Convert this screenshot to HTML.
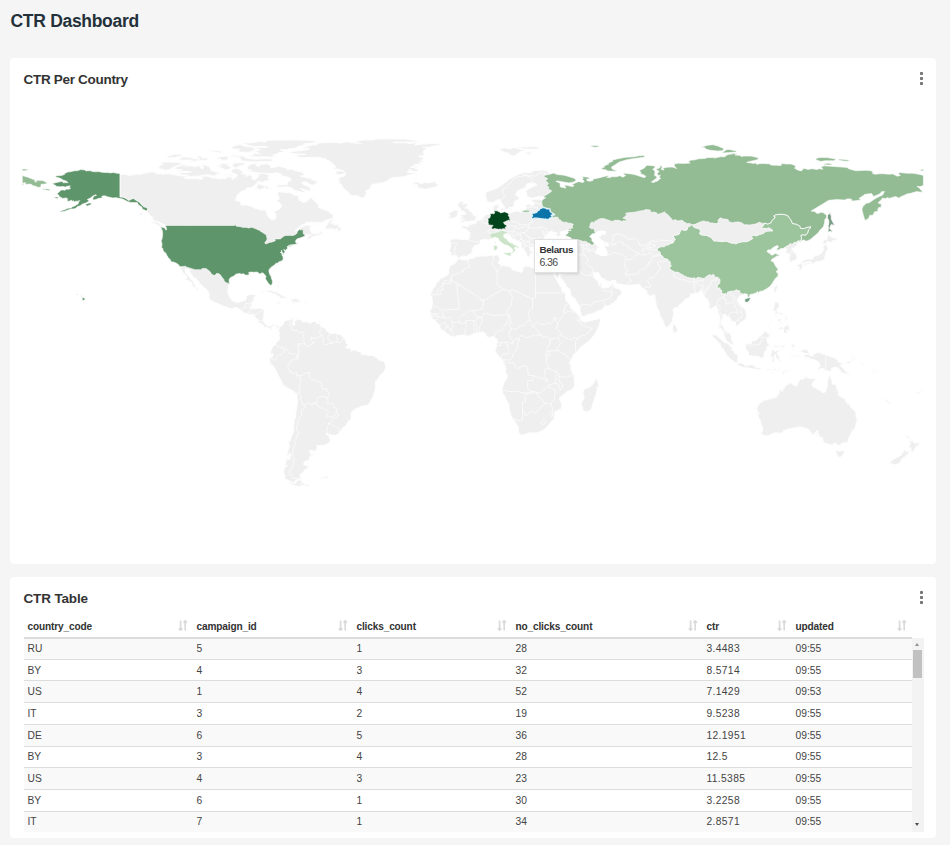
<!DOCTYPE html>
<html><head><meta charset="utf-8">
<style>
*{box-sizing:border-box;margin:0;padding:0}
html,body{width:950px;height:845px;overflow:hidden;background:#f5f5f5;font-family:"Liberation Sans",sans-serif;}
body{position:relative}
.title{position:absolute;left:10.5px;top:10px;font-size:17.5px;line-height:22px;font-weight:bold;color:#24313b;letter-spacing:-0.3px;white-space:nowrap}
.card{position:absolute;left:10px;width:926px;background:#fff;border-radius:4px}
#c1{top:58px;height:506px}
#c2{top:577px;height:261px}
.ct{position:absolute;left:13.5px;font-size:13.5px;line-height:16px;font-weight:bold;color:#333;white-space:nowrap;letter-spacing:-0.3px}
.kebab{position:absolute;width:3px;height:13px;left:910.5px}
.kebab i{position:absolute;left:-0.4px;width:3px;height:3px;border-radius:0.8px;background:#767676}
#map{position:absolute;left:0;top:0;width:950px;height:845px;pointer-events:none}
.tip{position:absolute;left:534.4px;top:238.5px;width:43.2px;height:34.4px;background:#fff;border:1px solid #e2e2e2;border-radius:1px;box-shadow:1px 1px 3px rgba(0,0,0,.15);font-size:10.6px;letter-spacing:-0.6px;color:#4a4a4a;padding:4px 0 0 4px;line-height:12.9px;white-space:nowrap}
.tip b{display:block;font-size:9.9px;color:#333;letter-spacing:-0.35px}
table{position:absolute;left:14px;top:39.6px;width:888px;border-collapse:collapse;table-layout:fixed;font-size:10.25px;color:#444}
th,td{text-align:left;padding:0 0 0 3.5px;white-space:nowrap;overflow:hidden}
th{height:21px;font-weight:bold;color:#333;border-bottom:2px solid #dcdcdc;position:relative;font-size:10.1px;letter-spacing:-0.15px}
td{height:21.7px;border-top:1px solid #dddddd}
tbody tr:nth-child(odd){background:#f9f9f9}
tbody tr:first-child td{border-top:none}
.tw{position:absolute;left:0;top:0;width:926px;height:254.8px;overflow:hidden}
.si{position:absolute;right:5.5px;top:3.8px;width:10px;height:11px}
.sb{position:absolute;left:902px;top:61px;width:11.5px;height:193.5px;background:#f3f3f3}
.sb .th{position:absolute;left:1px;top:12.2px;width:8.7px;height:27.5px;background:#c1c1c1}
.sb .up{position:absolute;left:3px;top:5px;width:0;height:0;border-left:2.8px solid transparent;border-right:2.8px solid transparent;border-bottom:3.4px solid #8f8f8f}
.sb .dn{position:absolute;left:3px;bottom:5.5px;width:0;height:0;border-left:2.8px solid transparent;border-right:2.8px solid transparent;border-top:3.4px solid #4d4d4d}
td:nth-child(5){letter-spacing:0.35px}
</style></head><body>
<div class="title">CTR Dashboard</div>
<div class="card" id="c1">
  <div class="ct" style="top:14px">CTR Per Country</div>
  <div class="kebab" style="top:14px"><i style="top:0"></i><i style="top:5px"></i><i style="top:10px"></i></div>
</div>
<div class="card" id="c2">
  <div class="ct" style="top:13.5px;letter-spacing:-0.15px">CTR Table</div>
  <div class="kebab" style="top:14px"><i style="top:0"></i><i style="top:5px"></i><i style="top:10px"></i></div>
  <div class="tw">
  <table>
   <colgroup><col style="width:169px"><col style="width:160px"><col style="width:159px"><col style="width:191px"><col style="width:89px"><col style="width:120px"></colgroup>
   <thead><tr>
    <th>country_code<svg class="si" viewBox="0 0 10 11"><path d="M2.6 0.6V10M0.9 8.2L2.6 10.2L4.3 8.2M7.2 10.4V1M5.5 2.8L7.2 0.8L8.9 2.8" fill="none" stroke="#dadada" stroke-width="1.7"/></svg></th>
    <th>campaign_id<svg class="si" viewBox="0 0 10 11"><path d="M2.6 0.6V10M0.9 8.2L2.6 10.2L4.3 8.2M7.2 10.4V1M5.5 2.8L7.2 0.8L8.9 2.8" fill="none" stroke="#dadada" stroke-width="1.7"/></svg></th>
    <th>clicks_count<svg class="si" viewBox="0 0 10 11"><path d="M2.6 0.6V10M0.9 8.2L2.6 10.2L4.3 8.2M7.2 10.4V1M5.5 2.8L7.2 0.8L8.9 2.8" fill="none" stroke="#dadada" stroke-width="1.7"/></svg></th>
    <th>no_clicks_count<svg class="si" viewBox="0 0 10 11"><path d="M2.6 0.6V10M0.9 8.2L2.6 10.2L4.3 8.2M7.2 10.4V1M5.5 2.8L7.2 0.8L8.9 2.8" fill="none" stroke="#dadada" stroke-width="1.7"/></svg></th>
    <th>ctr<svg class="si" viewBox="0 0 10 11"><path d="M2.6 0.6V10M0.9 8.2L2.6 10.2L4.3 8.2M7.2 10.4V1M5.5 2.8L7.2 0.8L8.9 2.8" fill="none" stroke="#dadada" stroke-width="1.7"/></svg></th>
    <th>updated<svg class="si" viewBox="0 0 10 11"><path d="M2.6 0.6V10M0.9 8.2L2.6 10.2L4.3 8.2M7.2 10.4V1M5.5 2.8L7.2 0.8L8.9 2.8" fill="none" stroke="#dadada" stroke-width="1.7"/></svg></th>
   </tr></thead>
   <tbody>
    <tr><td>RU</td><td>5</td><td>1</td><td>28</td><td>3.4483</td><td>09:55</td></tr>
    <tr><td>BY</td><td>4</td><td>3</td><td>32</td><td>8.5714</td><td>09:55</td></tr>
    <tr><td>US</td><td>1</td><td>4</td><td>52</td><td>7.1429</td><td>09:53</td></tr>
    <tr><td>IT</td><td>3</td><td>2</td><td>19</td><td>9.5238</td><td>09:55</td></tr>
    <tr><td>DE</td><td>6</td><td>5</td><td>36</td><td>12.1951</td><td>09:55</td></tr>
    <tr><td>BY</td><td>3</td><td>4</td><td>28</td><td>12.5</td><td>09:55</td></tr>
    <tr><td>US</td><td>4</td><td>3</td><td>23</td><td>11.5385</td><td>09:55</td></tr>
    <tr><td>BY</td><td>6</td><td>1</td><td>30</td><td>3.2258</td><td>09:55</td></tr>
    <tr><td>IT</td><td>7</td><td>1</td><td>34</td><td>2.8571</td><td>09:55</td></tr>
    <tr><td>DE</td><td>2</td><td>2</td><td>30</td><td>6.25</td><td>09:55</td></tr>
   </tbody>
  </table>
  </div>
  <div class="sb"><div class="up"></div><div class="th"></div><div class="dn"></div></div>
</div>
<svg id="map" viewBox="0 0 950 845">
<g fill="#efefef" stroke="#fdfdfd" stroke-width="1.15" stroke-linejoin="round"><path d="M119.9,173.9L124.9,174.1L129.9,175.4L133.4,174.6L136.4,173.9L140.2,174.1L143.9,173.1L148.0,172.4L152.2,171.6L153.7,171.9L158.0,174.1L161.5,172.6L161.7,174.4L164.7,173.9L168.7,173.4L172.7,174.4L178.5,175.4L182.0,175.9L184.5,175.6L187.7,176.9L184.2,178.1L188.7,178.6L195.5,178.4L197.8,177.9L200.3,179.4L203.0,178.1L200.5,177.1L202.0,176.3L205.1,176.1L207.1,175.9L209.3,176.4L211.8,177.9L214.5,177.6L218.8,178.9L222.8,178.4L226.5,178.4L226.0,176.9L228.3,176.4L232.3,177.4L232.3,179.6L233.8,177.6L235.8,177.6L237.1,175.1L234.3,173.6L231.3,172.6L231.6,169.9L234.6,168.1L237.8,168.4L240.3,169.6L243.8,172.4L241.6,173.6L246.3,174.1L246.1,176.6L249.6,174.6L252.6,176.4L251.8,178.1L254.1,179.9L256.8,178.1L258.6,175.9L258.8,173.1L262.3,173.4L266.1,173.6L269.3,174.9L269.6,176.1L267.7,177.6L269.3,178.9L269.1,180.1L264.3,181.9L260.8,182.2L258.1,181.4L257.3,182.7L255.1,184.9L254.3,185.9L251.3,187.7L247.8,187.9L245.8,188.9L245.6,190.4L242.8,190.9L239.6,192.9L237.1,195.7L236.1,197.7L235.8,200.7L239.6,200.9L240.6,203.4L241.8,205.2L245.3,204.7L250.1,205.7L252.6,206.7L254.3,207.9L257.3,208.7L260.1,209.7L264.1,209.9L266.8,210.2L266.6,212.2L267.3,214.7L269.1,217.4L272.9,219.9L274.9,219.2L276.1,216.4L274.9,212.7L273.1,211.2L277.1,210.2L279.9,208.4L281.4,206.7L281.1,204.9L279.4,202.7L276.4,200.9L279.4,198.2L278.1,195.9L277.4,192.2L279.1,191.4L283.4,192.2L285.9,192.4L288.1,191.9L290.4,192.7L293.4,194.2L294.1,195.2L298.6,195.2L298.6,197.4L299.4,200.4L301.6,200.9L303.6,202.4L307.1,200.9L309.6,198.2L311.1,197.2L313.1,199.4L316.4,202.4L319.2,205.4L318.2,207.2L321.4,208.4L329.4,211.4L330.4,213.4L332.2,213.9L333.2,214.7L333.4,217.7L329.9,219.4L325.7,220.2L322.7,222.4L318.4,222.7L312.9,222.2L309.1,222.2L306.6,222.4L304.6,224.2L301.4,225.2L297.6,228.7L294.9,231.0L296.9,230.5L300.9,227.2L306.1,225.2L309.9,225.0L312.1,226.2L309.9,227.7L310.6,230.5L311.4,232.5L314.7,233.7L318.9,233.2L321.4,230.5L321.7,232.2L323.2,233.2L320.2,234.7L314.4,236.2L312.1,237.2L309.1,239.2L307.4,239.0L307.1,236.7L311.6,234.7L307.6,234.7L304.8,235.1L305.2,235.9L302.6,237.1L300.0,238.0L297.3,238.8L296.0,240.2L295.6,242.1L296.4,243.4L297.7,243.9L294.8,244.3L290.4,244.9L288.3,245.7L292.7,245.7L287.7,246.4L287.2,248.7L285.3,250.6L283.8,249.2L285.0,252.0L282.8,254.9L282.0,255.6L283.3,259.1L281.7,261.0L279.1,261.7L277.5,263.2L275.0,264.3L271.8,266.7L269.2,269.4L268.9,271.2L270.1,275.1L271.3,277.9L272.4,280.8L272.3,283.5L271.6,285.0L269.7,285.0L268.3,283.3L265.8,279.3L266.0,276.6L263.3,273.2L262.3,272.8L259.8,273.9L256.6,272.0L251.5,272.1L248.6,272.6L249.0,275.1L247.2,275.2L243.5,273.8L237.9,273.7L235.8,274.3L231.1,277.2L229.1,279.6L229.7,283.3L228.8,285.5L228.3,287.3L228.0,290.8L227.8,292.0L228.3,293.3L229.0,294.5L229.5,296.5L231.3,298.3L231.8,299.8L232.8,301.0L235.6,301.5L236.6,302.8L238.8,302.0L240.6,301.8L242.6,301.3L244.1,300.8L245.6,299.8L246.3,298.3L246.3,296.3L246.8,295.5L248.6,294.8L251.3,294.3L253.3,294.3L254.8,294.3L255.6,294.8L255.6,296.0L254.1,297.3L253.6,299.0L254.1,299.3L253.6,300.5L253.1,302.3L252.3,301.8L251.8,301.8L251.8,304.0L252.1,305.5L250.3,308.3L252.1,308.8L254.1,308.6L255.3,308.6L257.6,308.3L260.1,308.1L261.6,308.6L263.1,309.6L264.7,310.6L263.8,314.1L263.8,315.8L263.8,317.1L263.3,318.3L263.0,319.6L263.3,320.8L264.1,322.1L265.1,323.1L266.3,324.1L267.1,325.1L268.3,325.6L269.1,326.1L270.3,325.8L271.3,325.3L272.9,324.8L273.6,324.1L275.1,324.2L276.4,324.6L277.4,325.1L278.4,325.8L279.2,326.4L278.9,326.8L279.5,328.2L279.0,329.0L278.2,328.8L277.9,330.0L277.1,329.3L276.6,327.8L277.1,327.3L276.1,326.3L274.9,325.6L273.6,325.8L273.1,326.6L271.6,327.3L271.3,327.8L272.6,329.3L271.6,329.8L270.3,330.1L269.8,328.6L268.8,328.8L268.3,327.8L266.6,327.3L265.3,327.8L263.8,327.1L263.3,326.4L263.6,325.4L261.8,324.3L260.8,323.3L260.1,322.8L260.3,323.6L259.3,323.6L258.1,322.8L258.3,321.2L257.8,320.8L258.3,320.3L256.3,318.6L254.6,316.8L253.3,315.8L254.3,315.6L253.8,314.8L252.8,315.2L250.6,314.8L248.1,314.3L246.1,313.3L244.6,313.3L242.1,311.8L239.1,309.1L237.8,308.3L235.8,307.6L234.3,307.8L232.3,308.7L231.1,308.9L229.3,308.3L227.5,307.8L225.3,306.6L223.3,306.3L220.5,305.0L218.3,303.9L217.8,303.3L216.3,303.0L213.8,302.3L212.8,301.2L210.1,299.8L208.8,298.3L208.3,297.0L209.0,296.8L208.8,296.0L209.3,295.3L209.3,294.5L208.5,293.3L208.3,292.3L207.5,291.0L205.3,288.5L202.8,286.8L201.5,285.0L199.3,284.0L199.0,283.5L199.3,282.0L198.0,281.3L196.5,280.0L196.0,278.3L194.5,278.3L193.0,276.8L192.0,275.5L191.8,274.8L190.5,273.0L189.5,271.0L189.8,270.0L187.7,269.0L187.0,269.3L185.5,268.5L185.2,269.5L185.5,270.8L185.7,272.5L186.7,273.6L188.5,275.3L189.0,276.0L189.8,277.0L190.5,278.5L191.3,279.3L192.0,280.0L193.5,281.3L194.3,283.8L195.0,284.8L195.8,286.0L195.8,287.3L197.0,287.3L198.0,288.5L199.0,289.5L199.0,290.0L197.8,291.0L196.8,289.5L195.3,288.0L193.3,286.8L192.0,286.3L192.3,284.3L191.8,283.0L190.5,282.3L188.7,281.0L188.0,280.8L186.2,280.3L184.7,278.8L186.0,278.8L187.0,277.8L187.0,276.5L185.2,274.8L183.7,274.0L182.7,272.5L181.7,271.0L180.7,269.0L179.7,266.7L177.6,263.9L176.2,262.9L171.6,261.9L170.6,260.1L168.2,257.6L166.1,254.1L165.1,252.7L163.1,250.6L161.5,247.2L161.9,243.0L161.1,241.0L162.7,234.2L162.3,230.8L160.7,227.5L164.7,227.9L166.0,230.2L166.6,229.6L165.4,225.5L164.5,224.7L160.2,223.0L158.5,221.9L154.0,220.9L152.5,218.7L152.7,217.2L149.7,215.9L149.2,213.9L146.2,212.2L146.1,210.9L147.5,209.7L147.4,208.1L143.2,206.6L140.6,203.7L139.0,201.9L136.8,200.8L135.1,199.7L133.7,198.4L131.2,199.3L128.8,200.6L126.6,199.0L124.8,197.9L122.4,197.2L119.9,197.1ZM84.7,170.0L86.5,171.1L87.6,170.7L91.9,170.8L91.7,171.4L95.5,171.8L98.1,171.6L103.4,172.4L108.2,172.6L110.1,172.9L113.4,172.5L117.2,173.3L119.9,173.6L119.9,182.9L119.9,197.1L122.4,197.2L124.8,197.9L126.6,199.0L128.8,200.6L131.2,199.3L133.7,198.4L135.1,199.7L136.8,200.8L139.0,201.9L140.6,203.7L143.2,206.6L147.4,208.1L147.5,209.7L146.1,210.9L144.7,210.0L142.5,209.2L141.8,207.0L138.6,205.0L137.2,202.6L134.8,202.5L130.9,202.4L127.9,201.7L122.7,199.1L120.3,198.6L116.0,197.7L112.5,197.9L107.6,196.8L104.6,195.7L101.8,196.2L102.3,198.0L101.0,198.1L98.1,198.6L95.9,199.5L93.1,200.0L92.7,198.6L93.9,196.1L96.5,195.3L95.8,194.7L92.6,196.1L90.9,197.8L87.3,199.5L89.2,200.8L86.8,202.6L84.1,203.6L81.6,204.4L81.0,205.5L77.1,206.8L76.3,208.0L73.4,209.0L71.6,208.8L69.3,209.5L66.8,210.4L64.7,211.2L60.4,211.9L60.0,211.5L62.7,210.3L65.2,209.6L67.9,208.2L71.0,207.9L72.2,206.9L75.7,205.4L76.2,204.9L78.1,204.0L78.5,202.1L79.8,200.6L76.9,201.4L76.1,200.9L74.7,201.9L73.1,200.6L72.4,201.5L71.5,200.2L69.0,201.2L67.4,201.2L67.2,199.7L67.7,198.8L66.1,197.9L62.8,198.4L60.7,197.2L59.0,196.6L59.0,195.2L57.0,194.2L58.0,192.7L60.0,191.3L60.9,190.0L63.0,189.9L64.7,190.3L66.7,189.1L68.5,189.3L70.4,188.5L70.0,187.4L68.6,186.9L70.4,185.9L68.9,186.0L66.2,186.5L65.5,187.1L63.5,186.5L59.9,186.8L56.3,186.2L55.2,185.2L52.1,183.7L55.6,182.7L61.2,181.5L63.2,181.5L62.9,182.7L68.2,182.6L66.1,181.0L63.0,180.1L61.3,178.8L58.9,177.8L55.4,177.0L56.8,175.7L61.3,175.6L64.4,174.5L65.0,173.2L67.6,172.1L70.0,171.8L74.8,170.7L77.1,170.8L80.9,169.5L84.7,170.0ZM355.8,141.3L364.2,139.8L373.0,139.9L376.2,139.0L385.0,138.7L405.0,139.0L420.7,141.0L416.0,142.0L406.5,142.1L393.0,142.4L394.2,142.8L403.1,142.5L410.7,143.4L415.5,142.6L417.6,143.5L414.8,145.0L421.2,144.1L433.4,143.1L440.9,143.6L442.3,144.6L432.1,146.4L430.7,147.0L422.7,147.4L428.5,147.5L425.5,149.4L423.5,151.0L423.6,153.8L426.6,155.4L422.7,155.5L418.6,156.3L423.2,157.6L423.8,159.7L421.1,160.0L424.4,162.1L418.8,162.3L421.7,163.3L420.9,164.2L417.3,164.6L413.8,164.6L417.0,166.3L417.0,167.4L412.1,166.4L410.8,167.1L414.2,167.7L417.4,169.2L418.4,171.2L413.9,171.7L412.0,170.7L408.9,169.3L409.8,171.0L406.9,172.3L413.4,172.4L416.9,172.6L410.2,174.7L403.4,176.7L396.1,177.6L393.3,177.6L390.7,178.5L387.2,181.2L381.9,183.0L380.1,183.1L376.8,183.7L373.2,184.3L371.0,185.8L371.0,187.6L369.7,189.2L365.7,191.2L366.7,193.2L365.5,195.2L364.3,197.7L360.7,197.8L357.1,195.8L352.0,195.8L349.6,194.4L347.9,192.0L343.6,188.8L342.3,187.2L342.0,185.0L338.5,182.7L339.4,180.8L337.8,179.9L340.2,177.0L344.0,176.1L345.0,175.0L345.5,173.1L342.7,174.0L341.3,174.3L339.0,174.7L336.0,173.9L335.8,172.2L336.8,170.8L339.1,170.8L344.2,171.5L339.9,169.9L337.7,169.0L335.2,169.4L333.1,168.8L335.9,166.4L334.3,165.5L332.4,163.8L329.4,161.1L326.2,160.1L326.2,159.1L319.5,157.6L314.2,157.4L307.5,157.5L301.4,157.7L298.5,156.9L294.1,155.3L300.7,154.6L305.7,154.4L295.0,153.8L289.4,152.8L289.7,151.8L299.2,150.6L308.4,149.4L309.3,148.5L302.6,147.6L304.8,146.6L313.4,144.8L317.1,144.6L316.0,143.4L322.0,142.8L329.6,142.4L337.4,142.4L340.1,143.1L346.7,141.8L352.7,142.7L356.2,142.9L361.4,143.7L355.4,142.4L355.8,141.3ZM256.2,165.0L258.2,166.6L260.5,164.5L266.8,163.5L271.1,166.1L270.7,167.7L275.7,167.0L278.1,166.0L283.6,167.3L287.0,168.5L287.4,169.6L292.0,169.0L294.6,170.6L300.7,171.6L302.9,172.6L305.2,174.9L300.6,176.1L306.5,177.7L310.5,178.3L314.1,180.6L318.0,180.7L317.3,182.5L312.8,185.4L309.8,184.3L305.8,181.9L302.6,182.3L302.3,183.7L304.9,185.1L308.3,186.3L309.3,187.0L311.0,189.4L310.1,191.2L306.9,190.5L300.7,188.5L304.2,190.7L306.8,192.2L307.2,193.1L300.4,192.1L295.1,190.6L292.0,189.4L292.9,188.7L289.2,187.4L285.5,186.2L285.6,186.9L278.3,187.3L276.2,186.5L277.9,184.6L282.6,184.6L287.7,184.3L286.9,183.4L287.8,182.1L291.0,179.7L290.3,178.6L289.3,177.7L285.5,176.5L280.4,175.7L282.0,175.0L279.4,173.5L277.2,173.3L275.2,172.5L273.9,173.2L269.3,173.5L260.2,173.0L254.9,172.2L250.9,171.9L248.8,171.0L251.4,169.8L247.8,169.8L247.0,167.3L249.0,165.1L251.5,164.0L258.0,163.4L256.2,165.0ZM171.3,169.4L164.7,170.6L163.4,169.5L157.6,168.2L158.7,167.2L160.4,165.3L162.6,163.7L160.2,162.2L168.6,161.8L172.2,162.3L178.6,162.4L181.0,163.1L183.7,164.2L180.6,164.8L174.4,166.6L171.3,168.3L171.3,169.4ZM187.1,165.1L185.8,166.3L191.4,165.5L194.9,166.8L197.7,165.5L200.0,166.3L202.0,168.8L203.3,167.7L201.5,165.2L203.7,164.8L206.2,165.2L209.0,166.2L210.6,168.6L211.4,170.4L215.6,171.6L220.1,172.8L219.8,173.9L215.7,174.1L217.3,175.1L216.5,176.0L211.9,175.6L207.6,174.9L204.7,175.1L200.0,175.9L193.7,176.3L189.2,176.5L187.9,175.4L184.4,174.7L182.2,175.0L179.1,173.0L180.8,172.7L184.7,172.3L188.2,172.4L191.5,172.0L186.6,171.4L181.3,171.6L177.7,171.5L176.4,170.6L182.2,169.6L178.3,169.6L174.0,169.0L176.1,167.1L177.8,166.1L184.5,164.6L187.1,165.1ZM202.0,157.4L203.0,158.2L205.2,157.8L207.8,157.9L208.3,159.2L206.7,160.3L198.3,160.8L192.0,161.8L188.1,161.9L187.8,161.1L193.0,160.0L181.7,160.3L178.2,159.8L181.6,157.4L184.0,156.7L191.0,157.5L195.5,159.0L199.8,159.2L196.3,156.8L198.6,155.9L201.1,156.2L202.0,157.4ZM221.6,163.3L224.6,163.8L229.1,163.5L229.7,164.2L227.4,165.4L231.2,166.5L230.7,168.7L226.6,169.7L224.2,169.5L222.5,168.5L216.3,166.6L216.3,165.8L221.4,166.1L218.7,164.5L221.6,163.3ZM239.6,166.0L236.9,167.8L234.0,167.7L232.5,165.5L232.5,164.3L233.8,163.2L236.3,162.6L241.5,162.6L246.3,163.2L242.6,165.5L239.6,166.0ZM241.5,160.8L240.6,159.4L240.3,158.2L237.8,157.1L232.7,156.8L229.7,156.0L230.7,155.0L235.9,155.1L238.6,155.9L243.5,155.9L245.7,156.7L245.1,157.7L248.0,158.2L249.6,158.8L253.0,158.9L256.6,159.2L260.6,158.6L265.7,158.4L269.8,158.6L272.4,159.5L273.0,160.6L271.4,161.2L267.7,161.8L264.5,161.5L257.3,161.9L252.2,161.9L248.2,161.6L241.5,160.8ZM255.0,148.7L258.1,149.5L254.6,150.3L250.0,152.1L245.6,152.3L240.4,152.0L237.7,151.0L237.7,150.1L239.7,149.4L235.1,149.4L232.4,148.6L230.8,147.5L232.5,146.4L234.3,145.6L236.8,145.4L235.7,144.8L241.5,144.7L244.7,146.1L248.9,146.6L253.1,147.1L255.0,148.7ZM301.4,140.1L308.1,140.3L313.4,140.6L318.0,141.3L317.9,142.0L311.8,143.0L305.8,143.5L303.5,144.1L308.9,144.1L303.0,145.6L299.0,146.3L294.7,148.4L289.5,148.8L287.9,149.3L280.3,149.6L283.8,149.9L282.1,150.3L284.1,151.5L281.8,152.4L277.9,153.1L276.7,154.1L273.2,154.8L273.6,155.4L277.8,155.3L277.9,155.9L271.2,157.4L264.7,156.7L257.3,157.1L253.6,156.8L248.8,156.7L248.5,155.5L253.2,154.9L251.9,153.1L253.5,152.9L260.1,154.0L256.7,152.4L252.7,151.9L254.7,151.0L259.1,150.4L259.9,149.5L256.3,148.5L255.3,147.2L262.1,147.3L264.1,147.6L268.0,146.7L262.3,146.4L253.6,146.6L249.1,145.7L247.1,144.7L244.1,144.0L243.6,143.1L247.3,142.6L250.2,142.6L255.2,142.2L258.8,141.2L261.9,141.4L264.6,142.1L266.5,140.7L269.8,140.3L274.3,140.0L282.0,139.9L283.3,140.2L290.5,139.8L296.0,139.9L301.4,140.1ZM259.7,183.8L260.1,184.9L261.4,184.5L262.9,185.1L265.6,186.0L268.5,186.8L268.7,188.0L270.5,187.8L272.3,188.6L270.1,189.4L266.2,188.8L264.8,187.7L262.3,189.0L258.8,190.3L257.9,188.8L254.5,189.1L256.7,187.8L257.0,185.9L257.9,183.6L259.7,183.8ZM168.7,155.6L174.7,154.1L182.0,153.9L181.7,155.6L179.7,156.6L172.7,157.7L165.3,157.6L168.7,155.6ZM226.3,156.1L228.3,157.2L228.3,158.5L227.1,160.4L220.3,160.2L220.4,158.8L216.3,159.0L216.1,157.0L218.8,157.1L222.6,156.2L226.3,156.1ZM208.8,149.6L220.5,150.9L223.4,153.1L219.3,152.8L215.0,152.1L209.5,151.9L212.0,151.2L209.0,150.6L208.8,149.6ZM226.1,174.4L230.0,174.1L233.6,175.1L231.8,176.0L228.5,175.3L226.5,175.5L223.0,174.4L226.1,174.4ZM332.3,221.2L330.7,223.4L332.3,222.6L334.0,223.1L333.1,224.0L335.3,224.7L336.5,224.1L339.0,224.8L338.2,226.7L340.0,226.2L340.3,227.6L341.1,229.1L340.0,231.3L338.9,231.4L337.2,230.9L337.8,228.9L337.1,228.6L334.2,230.8L332.7,230.7L334.4,229.5L332.0,228.9L329.3,229.0L324.5,229.0L324.1,228.2L325.7,227.3L324.6,226.7L326.7,225.1L329.3,221.1L330.8,219.7L333.0,218.9L334.1,219.0L333.7,219.6L332.3,221.2ZM151.6,221.0L154.2,221.6L155.7,221.9L158.1,222.2L158.9,223.1L160.2,224.3L162.7,225.3L163.7,226.7L162.4,227.0L158.3,225.9L157.6,225.0L155.3,224.1L154.9,223.4L152.3,223.0L151.4,221.6L151.6,221.0ZM139.5,212.5L140.7,212.8L143.1,212.6L142.3,215.5L144.5,217.5L143.5,217.5L142.0,216.3L141.1,215.2L139.8,214.4L139.3,213.3L139.5,212.5ZM311.4,223.3L315.5,223.7L318.1,224.7L318.2,225.2L313.7,224.5L311.3,223.3ZM312.6,230.4L313.5,231.6L315.3,231.9L317.6,231.9L316.4,232.9L315.5,233.0L312.3,232.0L311.7,231.1L312.6,230.4ZM266.9,290.1L269.1,290.2L271.0,290.3L273.4,291.1L274.4,292.0L276.7,291.8L277.6,292.3L279.7,293.9L281.3,295.0L282.1,295.0L283.6,295.5L283.4,296.2L285.3,296.3L287.2,297.3L286.9,297.9L285.2,298.2L283.5,298.4L281.8,298.2L278.2,298.4L279.9,297.0L278.9,296.4L277.3,296.2L276.4,295.5L275.8,294.0L274.4,294.1L272.0,293.5L271.3,292.9L268.0,292.6L267.2,292.1L268.1,291.4L265.6,291.3L263.9,292.6L262.8,292.7L262.5,293.3L261.2,293.5L260.2,293.3L261.5,292.5L262.0,291.6L263.1,291.1L264.4,290.6L266.3,290.3L266.9,290.1ZM293.3,298.8L293.7,298.3L295.6,298.3L297.1,299.0L297.8,298.9L298.2,299.8L299.6,299.8L299.5,300.5L300.6,300.6L301.8,301.5L300.9,302.5L299.7,302.0L298.6,302.1L297.8,302.0L297.3,302.4L296.3,302.6L296.0,302.0L295.1,302.3L294.1,304.0L293.5,303.6L293.3,302.9L291.7,302.5L290.5,302.7L289.0,302.5L287.8,303.0L286.5,302.2L286.7,301.4L289.0,301.7L290.9,301.9L291.8,301.4L290.6,300.3L290.7,299.3L289.1,298.9L289.6,298.2L291.2,298.4L293.3,298.8ZM278.7,301.8L280.4,302.0L281.7,302.6L282.1,303.3L280.4,303.4L279.6,303.8L278.2,303.4L276.8,302.5L277.1,301.9L278.1,301.7L278.7,301.8ZM306.9,301.8L308.2,302.0L308.7,302.5L308.0,303.1L306.1,303.1L304.7,303.2L304.5,302.1L304.9,301.7L306.9,301.8ZM278.8,288.6L278.2,288.8L277.5,287.3L276.6,286.6L277.1,285.0L277.9,285.1L278.8,287.2L278.8,288.6ZM278.1,281.6L275.3,282.0L275.2,281.0L276.3,280.8L278.0,280.9L278.1,281.6ZM280.1,281.5L279.7,283.3L279.2,283.0L279.3,281.7L278.1,280.7L278.1,280.4L280.1,281.5ZM318.5,321.2L319.9,320.8L320.4,320.9L320.3,322.8L318.2,323.1L317.8,322.8L318.5,322.1L318.5,321.2ZM279.2,326.4L280.5,326.5L282.4,324.7L283.4,324.5L283.5,323.1L283.9,321.5L285.3,320.4L286.9,320.3L287.1,319.8L289.1,320.0L291.0,318.7L292.0,318.2L293.2,317.0L294.1,317.1L294.8,317.8L294.3,318.6L294.2,319.2L292.7,319.5L293.6,320.6L293.6,321.9L292.4,323.4L293.4,325.4L294.5,325.2L295.0,323.4L294.3,322.5L294.1,320.6L297.2,319.6L296.9,318.4L297.8,317.7L298.7,319.4L300.4,319.5L302.1,320.8L302.2,321.7L304.4,321.7L307.1,321.4L308.5,322.6L310.4,322.9L311.8,322.1L311.8,321.5L315.0,321.3L318.0,321.3L315.8,322.0L316.7,323.2L318.7,323.4L320.6,324.6L321.0,326.6L322.3,326.6L323.3,327.1L324.9,328.1L326.5,329.7L326.5,331.0L327.5,331.1L328.8,332.3L329.8,333.2L332.8,333.7L333.1,333.2L335.1,333.0L337.8,333.7L338.6,334.0L340.5,334.6L343.1,336.7L343.5,337.7L344.4,337.6L345.0,339.0L346.4,343.3L347.8,343.7L347.8,345.5L345.9,347.5L346.7,348.3L351.1,348.7L351.2,351.2L353.1,349.6L356.3,350.5L360.4,352.0L361.7,353.5L361.3,354.8L364.2,354.1L369.0,355.4L372.8,355.3L376.5,357.4L379.7,360.2L381.6,360.9L383.7,361.0L384.6,361.8L385.5,365.0L385.9,366.5L384.9,370.6L383.6,372.3L380.1,375.7L378.5,378.6L376.7,380.7L376.0,380.8L375.3,382.6L375.5,387.3L374.8,391.2L374.5,392.8L373.8,393.8L373.3,397.2L370.8,400.4L370.4,403.0L368.3,404.1L367.7,405.6L365.0,405.6L361.1,406.5L359.3,407.7L356.5,408.4L353.6,410.4L351.4,412.9L351.1,414.7L351.5,416.1L351.0,418.7L350.5,419.9L348.7,421.2L345.9,425.6L343.7,427.6L342.0,428.8L340.9,431.2L339.3,432.6L338.2,434.2L335.3,435.6L333.5,435.1L332.1,435.4L329.8,434.3L328.1,434.4L326.6,433.0L326.4,434.3L329.6,436.4L329.3,438.2L330.8,439.2L330.7,440.5L328.3,443.7L324.6,445.0L319.6,445.5L316.8,445.3L317.3,446.8L316.8,448.6L317.3,449.9L315.8,450.8L313.2,451.1L310.8,450.2L309.8,450.9L310.2,453.4L311.9,454.1L313.2,453.3L314.0,454.6L311.7,455.4L309.7,457.0L309.3,459.5L308.7,460.8L306.4,460.8L304.4,462.1L303.7,464.0L306.1,465.8L308.5,466.3L307.7,468.6L304.7,470.0L303.1,472.9L300.8,473.9L299.8,475.1L300.6,477.7L302.3,479.1L301.2,479.0L299.0,479.0L297.8,479.6L295.5,480.5L295.1,482.8L294.1,482.9L291.2,482.1L288.4,480.4L285.2,478.9L284.5,477.3L285.2,475.9L283.9,474.2L283.6,469.9L284.7,467.5L287.3,465.6L283.5,464.9L285.9,462.6L286.7,458.5L289.5,459.4L290.8,454.2L289.1,453.5L288.4,456.7L286.8,456.3L287.6,452.7L288.4,448.1L289.6,446.4L288.8,443.9L288.6,441.1L289.7,441.0L291.2,437.0L293.0,433.0L294.0,429.2L293.4,425.5L294.2,423.4L293.9,420.3L295.4,417.3L295.8,412.5L296.6,407.2L297.4,401.6L297.2,397.6L296.7,394.0L294.2,392.6L294.0,391.6L289.0,389.0L284.5,386.3L282.6,384.8L281.6,382.7L282.0,382.0L279.8,378.7L277.4,374.1L275.0,369.1L274.0,367.9L273.2,366.1L271.2,364.5L269.5,363.5L270.3,362.3L269.1,360.0L269.8,358.2L271.8,356.6L273.2,354.8L272.6,353.7L271.7,354.8L270.2,353.7L270.7,353.0L270.3,350.8L271.1,350.4L271.6,348.8L272.5,347.2L272.4,346.2L273.8,345.6L275.5,344.6L275.1,343.9L276.1,343.7L276.0,342.4L276.5,341.5L277.8,341.3L278.8,339.8L279.8,338.5L278.9,337.9L279.3,336.4L278.8,334.1L279.3,333.5L278.9,331.4L277.9,330.0L278.2,328.8L279.0,329.0L279.5,328.2L278.9,326.8L279.2,326.4ZM301.1,479.9L302.0,481.0L303.3,482.9L306.5,484.4L310.0,485.0L308.9,486.3L306.5,486.4L305.2,485.5L303.7,485.4L301.1,485.4L299.6,487.0L297.7,486.3L295.1,485.9L292.0,484.5L289.4,483.2L286.0,480.4L288.0,480.9L291.5,482.6L294.9,483.4L296.2,482.3L297.0,480.6L299.3,479.6L301.1,479.9ZM319.7,477.9L322.7,476.4L324.8,477.0L326.3,476.0L328.3,477.1L327.5,478.0L324.2,478.8L323.0,477.9L320.9,479.0L319.7,477.9ZM458.0,258.6L459.8,258.6L461.4,259.7L463.7,259.5L466.3,260.0L467.4,260.1L469.8,258.7L472.5,258.3L474.1,257.2L476.5,256.5L480.7,256.0L484.9,255.8L486.2,256.2L488.5,255.2L491.2,255.2L492.2,255.8L493.9,255.6L496.6,254.6L498.4,254.9L498.3,256.2L500.4,255.3L500.6,255.7L499.4,257.0L499.3,258.1L500.2,258.7L499.9,260.9L498.2,262.2L498.7,263.5L500.0,263.6L500.6,264.8L501.6,265.2L504.5,266.0L505.6,265.8L507.7,266.2L511.0,267.3L512.2,269.6L514.4,270.1L517.9,271.1L520.6,272.3L521.8,271.7L523.0,270.5L522.4,268.6L523.2,267.4L525.0,266.2L526.8,265.9L530.2,266.4L531.0,267.5L531.9,267.5L532.7,268.0L535.2,268.3L535.8,269.1L539.2,269.0L541.6,269.7L544.1,270.4L545.2,270.8L547.1,270.0L548.2,269.3L550.4,269.1L552.2,269.4L552.8,270.7L553.4,269.9L555.4,270.5L557.4,270.6L558.6,270.0L560.2,274.3L559.5,275.3L559.0,277.2L558.3,278.5L557.7,278.9L556.9,278.1L555.8,277.0L554.0,273.4L553.7,273.6L554.8,276.2L556.3,278.8L558.2,282.7L559.1,284.0L559.9,285.4L562.2,288.2L561.7,288.7L561.8,290.3L564.7,292.5L565.1,293.0L565.9,295.5L565.4,295.9L565.7,298.5L566.7,301.5L567.6,302.1L569.0,303.0L570.5,305.9L571.1,308.3L572.5,309.5L575.9,311.8L577.3,313.3L579.4,315.6L580.7,316.3L581.3,317.1L581.2,318.1L579.8,318.7L580.8,319.4L581.6,319.9L582.1,320.9L583.3,321.9L584.5,322.0L586.9,321.3L589.6,321.0L591.8,320.2L593.0,320.1L593.9,319.6L595.4,319.5L596.2,319.5L597.3,319.1L598.6,318.9L599.8,318.0L600.8,318.0L600.8,318.7L600.6,320.1L600.6,321.5L600.1,322.4L599.4,325.1L598.2,327.9L596.6,331.1L594.5,334.7L592.3,337.5L589.4,340.9L586.9,343.0L583.1,345.5L580.8,347.4L578.1,350.4L577.5,351.7L576.9,352.3L575.2,353.3L574.6,354.4L573.6,354.5L573.3,356.3L572.5,357.3L572.0,359.0L571.0,359.8L569.8,362.9L570.0,364.3L571.6,365.2L571.6,365.9L570.9,367.4L571.1,368.1L570.9,369.4L571.8,370.9L572.8,373.4L573.8,373.9L574.2,375.1L574.1,377.5L574.4,379.7L574.5,383.6L574.9,384.9L574.2,386.7L573.2,388.4L571.6,390.0L569.3,390.9L566.5,392.1L563.6,394.8L562.7,395.3L560.9,397.0L559.9,397.6L559.7,399.4L560.9,401.3L561.4,402.8L561.4,403.5L561.8,403.4L561.8,405.8L561.4,407.0L562.0,407.4L561.6,408.5L560.5,409.4L558.5,410.2L555.5,411.6L554.4,412.5L554.6,413.6L555.2,413.7L555.0,415.0L554.4,416.9L554.1,418.9L553.4,420.1L551.7,421.3L551.3,421.7L550.2,423.0L549.5,424.2L548.1,426.0L545.3,428.6L543.5,430.1L541.6,431.3L539.0,432.2L537.7,432.4L537.4,433.1L535.8,432.7L534.6,433.2L531.9,432.7L530.4,433.0L529.3,432.9L526.8,433.9L524.6,434.3L523.1,435.2L521.9,435.3L520.9,434.4L520.0,434.3L518.9,433.2L518.8,433.6L518.5,432.9L518.5,431.4L517.7,429.7L518.5,429.3L518.4,427.3L516.8,425.0L515.5,422.9L513.7,419.6L511.9,417.7L510.9,415.9L510.4,413.5L509.7,411.7L508.9,407.8L508.9,404.8L508.5,403.4L507.6,402.4L506.3,400.3L505.0,397.3L504.4,395.8L502.4,393.3L502.2,391.4L502.0,389.8L502.3,387.6L503.2,385.3L503.3,384.3L504.1,382.0L504.7,381.0L506.2,379.3L507.0,378.2L507.2,376.4L507.1,375.0L506.4,374.1L505.7,372.6L505.1,371.1L505.2,370.5L506.0,369.5L505.2,367.1L504.7,365.4L503.5,363.8L503.7,363.4L503.3,362.6L502.7,360.7L500.6,358.1L498.0,355.5L496.4,353.5L494.9,350.9L494.9,350.1L495.5,349.3L496.1,347.4L496.6,345.6L496.1,345.2L497.0,342.4L497.4,340.4L496.4,338.8L495.2,338.3L494.7,337.2L494.1,336.8L494.1,336.2L491.5,337.1L490.6,336.9L489.6,337.5L487.6,337.4L486.3,335.9L485.4,334.1L483.7,332.4L481.8,332.4L479.6,332.4L477.5,332.7L475.5,333.3L471.6,334.7L470.2,335.6L467.9,336.3L465.7,335.6L464.6,335.6L462.8,335.1L461.2,335.2L458.2,335.6L456.5,336.3L454.0,337.2L453.5,337.2L452.9,337.2L450.3,336.0L448.0,334.1L445.9,332.7L444.2,331.1L443.5,330.9L441.7,329.9L440.4,328.6L440.0,327.7L439.7,325.8L438.6,324.3L437.6,323.3L437.0,323.0L436.3,322.5L436.1,321.4L435.7,320.9L435.0,320.5L433.6,319.4L432.6,319.3L432.0,318.5L432.0,318.2L431.3,317.6L431.1,317.1L430.7,315.2L431.0,314.1L430.0,312.1L428.7,311.2L429.8,310.8L431.0,309.0L431.6,307.7L431.4,306.4L432.1,305.1L432.4,302.8L432.1,300.3L431.8,299.1L432.1,297.8L431.4,296.6L430.1,295.5L430.2,294.5L430.4,293.3L431.3,292.6L432.1,291.3L432.0,290.5L432.8,288.7L434.2,287.1L435.1,286.7L435.7,285.3L435.8,283.9L436.7,282.4L438.4,281.5L440.0,278.9L441.3,277.9L443.6,277.6L445.6,275.9L446.8,275.3L448.9,273.2L448.3,270.1L449.2,267.9L449.6,266.6L451.2,264.9L453.7,263.7L455.5,262.7L457.2,260.1L458.0,258.6ZM596.8,379.3L597.5,380.4L598.1,382.0L598.5,385.0L599.2,386.2L598.9,387.4L598.5,388.1L597.6,386.7L597.2,387.4L597.6,389.3L597.4,390.4L596.7,390.9L596.6,393.0L595.6,396.0L594.4,399.4L592.8,404.1L591.9,407.6L590.7,410.5L588.7,411.1L586.5,412.2L585.0,411.6L583.1,410.6L582.4,409.3L582.2,407.1L581.3,405.1L581.1,403.3L581.5,401.5L582.7,401.1L582.7,400.2L583.9,398.3L584.1,396.8L583.5,395.6L583.1,394.0L582.9,391.7L583.7,390.3L584.1,388.7L585.3,388.6L586.7,388.1L587.7,387.6L588.8,387.6L590.2,386.2L592.3,384.6L593.0,383.4L592.7,382.3L593.7,382.6L595.1,380.9L595.1,379.4L596.0,378.2L596.8,379.3ZM550.7,174.0L553.3,173.1L557.4,174.6L564.2,175.2L573.7,178.1L575.6,179.2L575.8,180.9L573.0,182.2L568.9,182.9L557.7,181.0L555.9,181.3L560.0,183.2L560.1,184.3L560.3,186.9L563.5,187.6L565.5,188.3L565.8,187.1L564.3,186.0L565.9,185.1L571.9,186.6L574.1,186.0L572.4,184.2L578.2,181.7L580.5,181.9L582.8,182.7L584.3,181.0L582.2,179.5L583.4,178.0L581.6,176.5L588.6,177.3L590.0,178.7L586.9,179.0L586.9,180.4L588.9,181.2L592.7,180.7L593.3,179.1L598.6,177.9L607.3,175.7L609.2,175.9L606.7,177.4L609.8,177.6L611.6,176.8L616.3,176.7L620.0,175.7L622.9,177.2L625.7,175.5L623.1,174.1L624.4,173.3L631.8,174.0L635.3,174.8L644.3,177.7L646.0,176.3L643.4,175.0L643.4,174.5L640.4,174.3L641.2,173.1L639.8,171.1L639.8,170.3L644.4,168.1L646.0,165.8L647.9,165.3L654.5,165.9L655.1,167.3L652.7,169.4L654.2,170.2L655.0,171.9L654.5,175.3L657.2,176.9L656.2,178.5L651.3,182.1L654.1,182.5L655.1,181.6L657.9,180.9L658.5,179.7L660.7,178.5L659.2,177.1L660.4,175.4L657.7,175.2L657.1,173.8L659.1,171.3L655.8,169.3L660.3,167.6L659.7,165.8L661.0,165.8L662.3,167.1L661.3,169.5L664.0,170.0L662.8,168.2L667.0,167.2L672.2,167.1L676.8,168.5L674.6,166.4L674.4,163.8L678.7,163.3L684.7,163.4L690.2,163.0L688.1,161.7L691.0,160.1L693.9,160.0L698.8,158.8L705.4,158.4L706.2,157.7L712.8,157.5L714.8,158.1L720.4,156.7L725.0,156.8L725.7,155.7L728.1,154.6L734.0,153.6L738.3,154.4L734.9,155.0L740.6,155.4L741.3,156.7L743.5,156.1L750.9,156.1L756.5,157.3L758.5,158.2L757.9,159.5L755.1,160.3L748.5,161.7L746.7,162.4L749.8,162.8L753.5,163.4L755.7,162.9L757.0,164.5L758.1,163.9L762.1,163.5L770.1,163.9L770.7,165.1L781.2,165.5L781.4,163.5L786.7,164.0L790.7,164.0L794.7,165.3L795.9,166.9L794.4,167.9L797.5,169.9L801.5,170.9L803.9,168.3L807.9,169.4L812.1,168.7L817.0,169.5L818.8,168.8L822.9,169.2L821.1,166.8L824.4,165.8L847.0,167.4L849.2,168.9L855.7,170.8L865.8,170.3L870.8,170.7L872.9,171.8L872.6,173.6L875.7,174.3L879.0,173.8L883.5,173.7L888.2,174.2L892.9,173.9L897.3,176.2L900.4,175.4L898.4,173.8L899.5,172.6L907.5,173.3L912.7,173.2L919.9,174.4L923.4,175.5L923.4,185.5L920.2,186.6L916.9,186.4L919.1,187.7L920.7,189.8L921.8,190.5L922.1,191.5L921.5,192.2L916.8,191.6L909.8,193.5L907.6,193.8L903.7,195.5L900.1,197.1L899.2,198.2L895.6,196.5L889.1,198.4L887.9,197.5L885.5,198.6L882.2,198.2L881.4,199.9L878.4,202.3L878.5,203.3L881.3,203.9L881.0,207.5L878.7,207.6L877.6,209.7L878.6,210.8L874.2,212.1L873.4,214.9L869.6,215.5L868.9,218.1L865.3,220.4L864.4,218.7L863.3,215.0L861.9,209.5L863.1,206.0L865.2,204.5L865.3,203.4L869.2,202.8L873.7,199.6L878.0,197.1L882.5,195.1L884.5,191.5L881.5,191.7L880.0,193.8L873.6,196.6L871.6,193.5L865.1,194.3L858.9,198.5L860.9,200.1L855.3,200.7L851.5,201.0L851.6,199.2L847.7,198.8L844.6,200.0L837.0,199.6L828.8,200.3L820.7,205.2L811.1,211.1L815.0,211.4L816.2,213.0L818.7,213.5L820.3,212.3L823.0,212.5L826.6,215.2L826.7,217.3L824.8,219.8L824.5,222.8L823.4,226.8L819.6,230.5L818.8,232.2L810.4,239.5L807.1,240.9L805.5,241.0L803.9,239.8L800.6,241.6L800.2,242.4L799.2,242.3L798.2,243.1L797.4,244.0L797.5,245.8L796.2,246.3L795.8,246.8L794.8,247.5L793.1,247.9L792.0,248.6L792.0,249.7L791.7,250.0L792.7,250.4L794.1,251.5L796.3,254.4L796.9,256.0L796.9,258.9L796.0,260.3L793.7,260.8L791.7,261.8L789.4,262.0L789.1,260.7L789.6,258.8L788.5,256.2L790.4,255.8L788.6,253.6L787.4,253.1L786.4,253.8L786.3,253.3L785.7,253.1L785.0,252.7L785.7,251.6L786.3,251.3L786.0,250.9L786.7,249.5L786.5,249.1L785.1,248.8L783.9,248.2L780.4,248.9L778.5,250.1L775.8,250.7L777.2,249.6L776.7,248.6L778.6,246.9L777.3,245.6L775.1,246.5L772.3,248.2L770.7,249.9L768.3,250.0L767.0,251.1L768.3,252.8L770.4,253.2L770.5,254.4L772.4,255.1L775.3,253.3L777.5,254.3L779.1,254.4L779.5,255.7L776.0,256.4L774.8,257.7L772.3,259.0L771.1,260.7L773.8,262.1L774.8,264.5L776.3,266.9L778.0,268.8L777.9,270.6L776.4,271.3L777.0,272.7L778.4,273.4L778.1,275.5L777.4,277.4L776.0,277.7L774.2,280.4L772.2,283.7L769.8,286.7L766.4,289.0L762.9,291.1L760.1,291.4L758.6,292.5L757.7,291.7L756.3,292.9L752.8,294.2L750.1,294.5L749.3,297.2L747.9,297.3L747.2,295.5L747.8,294.5L744.5,293.7L743.3,294.2L740.0,296.3L737.9,298.7L737.3,300.4L739.2,303.0L741.6,306.3L743.8,307.9L745.4,309.9L746.5,314.5L746.2,318.9L744.1,320.5L741.2,322.2L739.2,324.2L736.1,326.6L735.2,325.0L735.9,323.3L734.0,321.8L731.9,321.5L730.9,320.2L729.6,317.6L727.4,316.4L725.2,316.5L725.6,314.5L723.4,314.5L723.2,317.3L721.8,320.9L721.0,323.2L721.2,325.0L722.8,325.0L723.8,327.3L724.3,329.5L725.7,330.9L727.2,331.2L728.5,332.5L729.1,332.8L730.5,334.3L731.6,335.9L731.8,337.6L731.5,338.8L731.7,339.6L731.9,341.1L732.8,341.8L733.8,344.0L733.7,344.9L732.0,345.0L729.6,343.2L726.6,341.2L726.3,339.9L724.9,338.2L724.5,336.2L723.6,334.8L723.9,333.0L723.4,331.9L722.4,331.0L721.9,329.7L720.6,328.3L719.4,327.1L719.0,328.6L718.5,327.2L718.8,325.6L719.5,323.2L719.3,321.4L720.0,319.5L719.2,318.0L719.4,315.3L718.4,314.0L717.6,311.0L717.1,307.8L716.0,305.7L714.4,307.0L711.6,308.8L710.1,308.6L708.6,308.0L709.4,304.8L708.9,302.5L707.0,299.6L707.3,298.7L705.8,298.4L704.0,296.4L703.3,295.1L703.2,293.8L702.7,292.6L701.7,291.1L699.4,291.0L699.6,292.1L698.8,293.4L697.7,292.9L697.4,293.4L696.7,293.1L695.7,292.9L695.3,293.8L693.6,293.8L690.6,294.3L690.7,296.2L689.3,297.7L685.7,299.3L682.9,302.3L681.1,303.9L678.6,305.5L678.6,306.7L677.3,307.3L675.1,308.2L673.9,308.3L673.2,310.2L673.7,313.5L673.8,315.5L672.7,317.9L672.7,322.2L671.4,322.3L670.3,324.2L671.1,325.0L668.8,325.7L667.9,327.5L666.9,328.2L664.5,325.8L663.4,322.3L662.4,319.8L661.6,318.6L660.2,316.2L659.6,313.1L659.2,311.5L656.9,308.1L655.9,303.2L655.1,300.0L655.1,297.0L654.6,294.6L651.0,296.1L649.2,295.8L645.9,292.8L647.1,291.9L646.4,290.9L643.5,288.8L641.6,288.2L640.9,286.4L639.0,284.4L634.4,284.9L630.3,285.0L626.8,285.3L622.1,284.6L619.3,284.0L616.5,283.7L615.4,280.6L614.2,280.2L612.3,280.6L609.8,281.8L606.7,281.0L604.2,279.1L601.8,278.3L600.1,276.0L598.3,272.6L596.9,273.0L595.3,272.2L594.4,273.2L592.9,273.1L593.4,274.2L593.2,274.7L594.0,276.6L595.0,278.8L596.2,279.4L596.7,280.2L598.4,281.3L598.5,282.3L598.3,283.2L598.6,284.0L599.3,284.7L599.6,285.5L600.0,286.2L599.8,284.3L600.5,283.0L601.2,282.7L602.0,283.5L602.0,285.0L601.5,286.5L601.9,287.4L602.4,287.3L604.4,287.6L606.5,287.7L608.0,287.7L609.7,286.0L611.6,284.4L613.2,282.9L613.9,282.0L614.2,282.2L614.0,283.3L613.7,283.7L614.0,285.7L615.1,287.4L616.5,288.3L618.4,288.7L619.8,289.1L621.0,290.6L621.6,291.4L622.5,291.7L622.5,292.3L621.6,293.8L621.2,294.5L620.2,295.3L619.2,297.0L618.1,296.8L617.6,297.4L617.2,298.7L617.5,300.4L617.2,300.7L616.1,300.7L614.5,301.6L614.3,302.8L613.7,303.3L612.2,303.3L611.2,304.0L611.2,305.0L610.0,305.7L608.6,305.4L606.9,306.3L605.8,306.4L604.0,307.1L603.5,308.2L603.4,309.1L600.9,310.1L596.9,311.3L594.7,313.1L593.6,313.2L592.8,313.0L591.4,314.1L589.8,314.6L587.7,314.7L587.1,314.8L586.5,315.5L585.8,315.7L585.4,316.3L584.2,316.3L583.4,316.6L581.7,316.5L581.0,315.0L581.1,313.6L580.7,312.9L580.2,311.1L579.5,310.0L580.0,309.9L579.7,308.8L580.0,308.3L579.9,307.2L579.6,306.1L578.8,305.3L578.6,304.4L577.3,303.5L576.0,301.4L575.3,299.3L573.6,297.6L572.5,297.2L570.8,294.8L570.5,293.1L570.6,291.6L569.2,288.8L568.0,287.8L566.7,287.3L565.8,285.9L566.0,285.3L565.3,284.0L564.5,283.4L563.6,281.6L562.0,279.6L560.8,277.9L559.5,277.9L559.9,276.5L560.0,275.6L560.3,274.6L560.2,274.3L558.6,270.0L559.3,269.1L559.8,267.8L560.3,265.9L560.7,265.3L561.6,263.2L562.9,261.5L562.7,259.5L563.3,258.4L562.4,257.3L563.3,256.4L561.8,256.6L559.7,256.0L558.0,257.4L554.2,257.7L552.2,256.4L549.5,256.3L548.9,257.3L547.2,257.6L544.8,256.3L542.0,256.3L540.5,253.9L538.7,252.5L539.9,250.5L538.3,249.3L541.1,246.9L545.0,246.8L546.0,244.9L550.8,245.3L553.8,243.6L556.7,242.9L560.9,242.9L565.2,244.6L568.8,245.6L571.7,245.2L573.9,245.5L576.8,244.1L577.2,243.1L576.6,241.3L575.2,240.4L573.8,240.1L572.9,239.4L569.7,237.3L566.8,236.3L564.7,234.9L566.5,234.5L568.5,232.4L567.1,231.4L570.8,230.4L570.8,229.8L568.5,230.2L566.5,230.4L564.9,231.2L562.5,231.3L560.3,232.3L560.5,233.8L561.7,234.4L564.3,234.3L563.8,235.2L561.0,235.6L557.6,237.1L556.3,236.6L556.8,235.4L554.1,234.6L554.5,234.2L556.9,233.3L556.2,232.8L552.3,232.1L552.1,231.2L549.8,231.5L548.9,232.9L546.9,234.7L547.0,235.4L545.8,235.9L545.0,235.7L544.3,238.7L543.0,239.7L542.1,241.5L542.9,242.9L543.2,243.9L545.4,244.7L545.0,245.4L542.0,245.5L540.9,246.3L538.8,247.6L538.0,246.4L538.1,245.9L536.5,245.9L535.2,245.6L532.2,246.3L533.9,247.7L532.7,248.1L531.3,248.1L529.9,246.8L529.5,247.3L530.0,248.8L531.3,250.0L530.3,250.6L531.7,251.7L533.0,252.4L533.0,253.8L530.7,253.2L531.4,254.5L529.8,254.7L530.8,256.9L529.1,257.0L527.1,255.9L526.2,253.9L525.7,252.2L524.7,251.1L523.5,249.6L523.3,248.9L522.8,248.8L522.8,248.2L521.4,247.4L521.2,246.2L521.4,244.5L521.7,243.7L521.3,243.3L520.1,242.3L519.0,241.8L516.7,240.8L515.2,239.9L512.9,239.2L510.8,237.4L511.3,237.2L510.2,236.1L510.1,235.3L508.5,234.9L507.8,236.0L507.0,235.1L507.1,234.3L507.2,234.2L505.7,233.6L503.7,234.5L500.4,236.0L496.6,236.5L493.9,237.0L492.5,238.2L491.5,238.7L489.2,240.1L484.3,239.5L480.6,240.3L480.3,241.8L480.4,243.2L478.1,244.9L474.9,245.5L474.6,246.3L473.1,247.7L472.1,249.7L473.1,251.1L471.7,252.3L471.1,253.9L469.2,254.4L467.5,256.3L461.9,256.3L460.4,257.2L459.4,258.1L458.1,257.9L457.2,257.1L456.5,255.6L454.2,255.2L453.2,255.9L451.9,255.5L450.6,255.8L450.9,253.9L450.7,252.3L449.6,252.1L449.0,251.1L449.2,249.5L450.2,248.6L450.4,247.6L450.9,246.1L450.8,245.0L450.3,244.1L450.2,243.3L450.4,241.5L449.3,240.4L452.9,238.6L455.9,239.0L459.3,239.0L462.0,239.5L464.0,239.3L468.1,239.4L469.4,237.9L469.9,232.9L467.3,230.3L465.4,229.0L461.6,228.1L461.4,226.3L464.6,225.7L468.8,226.4L468.0,223.5L470.4,224.6L476.2,222.6L476.9,220.6L479.1,220.1L481.1,219.6L482.4,218.9L484.6,215.2L488.0,214.2L490.1,214.2L490.6,213.7L492.7,213.6L493.2,214.1L494.9,212.9L494.3,211.9L494.2,210.5L493.2,209.1L493.1,206.6L493.5,205.9L494.2,205.2L496.4,205.0L497.3,204.3L499.3,203.6L499.2,204.9L498.5,205.7L498.8,206.4L500.1,206.8L499.5,207.7L498.8,207.5L497.0,209.3L497.7,210.5L497.7,211.4L500.2,212.0L500.2,212.9L502.8,212.4L504.2,211.8L507.0,212.7L508.2,213.5L509.9,212.8L513.8,211.7L516.9,210.8L519.4,211.2L519.6,211.8L522.0,211.9L522.6,210.8L526.1,210.0L525.6,207.9L525.6,206.0L526.9,204.4L529.2,203.6L531.2,205.4L533.2,205.4L533.7,203.5L534.0,202.0L533.1,202.3L531.5,201.4L531.3,199.9L534.4,199.2L537.6,198.9L540.3,199.3L542.9,199.2L545.7,197.8L543.1,196.7L538.6,196.9L534.2,197.8L530.1,198.3L528.6,196.9L526.2,196.1L526.8,193.6L525.6,191.4L526.8,189.9L529.0,188.4L534.7,185.7L536.4,185.1L536.1,184.1L532.7,182.9L528.4,183.6L525.9,185.3L526.3,186.9L522.3,188.9L517.5,191.0L515.7,194.6L517.5,196.3L519.9,197.7L517.6,200.5L515.0,201.1L514.0,205.3L512.6,207.7L509.6,207.4L508.1,209.4L505.2,209.5L504.5,207.2L502.4,204.3L500.4,200.8L498.8,199.2L493.8,202.2L490.5,202.7L487.0,201.4L486.1,198.8L485.3,193.0L487.6,191.4L494.2,189.3L499.2,186.7L503.8,183.2L509.8,178.4L514.0,176.5L520.8,173.3L526.4,172.2L530.5,172.4L534.3,170.3L538.8,170.4L543.3,169.9L551.2,171.8L548.0,172.4ZM465.3,201.3L462.7,204.1L465.2,203.7L467.9,203.7L467.3,205.8L465.0,208.0L467.6,208.2L470.1,211.4L471.8,211.8L473.3,214.6L474.0,215.6L477.0,216.1L476.7,217.7L475.5,218.4L476.5,219.7L474.2,221.0L470.9,221.0L466.6,221.7L465.4,221.2L463.8,222.4L461.5,222.1L459.7,223.1L458.4,222.5L462.1,219.9L464.3,219.4L460.4,219.0L459.6,218.0L462.3,217.2L460.9,215.8L461.4,214.2L465.1,214.4L465.5,213.0L463.8,211.4L460.7,211.0L460.1,210.3L461.0,209.2L460.2,208.5L458.8,209.7L458.7,207.2L457.4,206.0L458.3,203.4L460.3,201.3L462.3,201.5L465.3,201.3ZM457.3,213.3L457.7,215.1L455.8,217.3L451.4,218.8L447.9,218.4L449.9,215.8L448.6,213.2L452.0,211.3L453.9,210.1L456.0,210.0L458.7,211.6L457.3,213.3ZM436.5,181.8L435.9,183.4L438.8,185.1L435.5,187.0L428.3,188.7L426.1,189.2L422.9,188.8L415.9,188.0L418.3,186.9L412.9,185.7L417.3,185.2L417.2,184.5L411.9,183.9L413.6,182.3L417.4,181.9L421.3,183.6L425.1,182.2L428.3,182.9L432.4,181.6L436.5,181.8ZM510.7,148.7L511.7,147.8L515.4,147.7L518.5,148.6L526.8,150.5L520.5,151.5L519.1,153.3L516.9,153.8L515.7,155.8L512.7,155.9L507.3,154.4L509.6,153.5L505.8,152.8L500.9,150.7L499.0,148.7L505.8,147.8L507.2,148.7L510.7,148.7ZM541.4,147.7L537.7,149.1L530.5,149.4L523.1,148.9L522.6,148.3L519.0,148.2L516.3,147.1L524.1,146.4L527.7,147.0L530.2,146.2L536.5,146.8L541.4,147.7ZM534.7,153.2L529.1,154.3L524.7,153.7L526.5,153.0L524.9,152.2L530.1,151.7L531.1,152.7L534.7,153.2ZM504.6,208.9L503.1,210.9L500.5,209.5L500.1,208.5L503.8,207.7L504.6,208.9ZM496.8,242.6L495.9,244.5L494.8,244.0L494.2,242.3L494.7,241.4L496.3,240.4L496.8,242.6ZM532.2,258.7L533.5,259.6L535.5,259.4L537.3,259.6L537.3,260.0L538.6,259.7L538.3,260.5L534.7,260.7L534.8,260.3L531.7,259.8L532.2,258.7ZM554.8,260.1L555.2,260.3L555.9,260.1L556.4,260.1L556.6,260.2L557.9,260.3L557.9,260.5L557.2,260.8L555.4,261.6L554.2,261.2L553.6,260.2L554.8,260.1L554.9,260.1L555.3,259.5L557.1,259.6L559.4,258.8L557.7,259.9L557.9,260.3ZM832.2,382.5L833.1,384.5L834.7,383.6L835.5,384.6L836.7,385.6L836.5,386.7L837.0,388.9L837.4,390.1L838.0,390.4L838.7,392.6L838.4,393.9L839.3,395.6L842.0,396.9L843.7,398.1L845.4,399.1L845.1,399.7L846.5,401.3L847.5,404.0L848.5,403.5L849.5,404.6L850.1,404.2L850.5,406.8L852.3,408.4L853.5,409.3L855.4,411.4L856.1,413.4L856.2,414.8L856.0,416.3L857.2,418.5L857.1,420.7L856.7,421.8L856.0,424.1L856.0,425.5L855.5,427.3L854.4,429.6L852.6,430.8L851.6,432.8L850.8,434.0L850.1,436.1L849.1,437.4L848.5,439.3L848.2,441.0L848.3,441.8L846.8,442.6L844.0,442.7L841.7,443.8L840.6,444.7L839.1,445.8L837.0,444.7L835.5,444.3L835.9,443.0L834.5,443.4L832.3,445.2L830.1,444.6L828.7,444.2L827.3,444.0L824.9,443.3L823.2,441.7L822.8,439.8L822.2,437.5L821.0,437.5L818.6,437.2L819.4,436.0L818.8,434.2L817.6,435.9L815.3,436.4L816.6,435.0L817.0,433.5L818.0,432.3L817.8,430.4L815.8,432.6L814.2,433.4L813.2,435.4L811.3,434.4L811.3,433.1L809.8,431.2L808.5,430.3L808.9,429.7L805.7,428.2L804.0,428.1L801.6,426.9L797.1,427.2L793.8,428.1L791.0,428.9L788.6,428.7L785.9,430.0L783.8,430.6L783.3,431.9L782.4,432.9L780.2,433.0L778.7,433.2L776.5,432.8L774.7,433.0L772.9,433.2L771.4,434.5L770.7,434.4L769.5,435.1L768.2,435.9L766.4,435.8L764.8,435.8L762.1,434.2L760.8,433.7L760.8,432.3L762.1,431.9L762.5,431.3L762.4,430.4L762.7,428.7L762.4,427.2L761.1,424.7L760.7,423.3L760.8,421.8L759.8,420.2L759.7,419.5L758.6,418.5L758.3,416.5L756.9,414.5L756.5,413.5L757.6,414.6L756.8,412.2L758.0,413.0L758.8,413.9L758.7,412.7L757.5,410.7L757.3,409.9L756.7,409.1L756.9,407.7L757.5,407.1L757.8,405.8L757.5,404.4L758.6,402.6L758.8,404.5L759.8,402.7L761.8,401.9L763.1,400.8L765.0,399.9L766.1,399.7L766.8,400.0L768.8,399.1L770.3,398.8L770.7,398.3L771.3,398.0L772.7,398.1L775.4,397.4L776.7,396.3L777.4,394.9L778.8,393.7L778.9,392.7L779.0,391.3L780.7,389.2L781.8,391.3L782.9,390.8L782.0,389.6L782.8,388.4L783.9,389.0L784.2,387.1L785.5,385.8L786.1,384.8L787.4,384.4L787.4,383.7L788.5,384.0L788.6,383.4L789.7,383.0L790.9,382.7L792.7,383.8L794.1,385.3L795.7,385.3L797.3,385.6L796.8,384.2L798.0,382.2L799.1,381.5L798.7,380.9L799.8,379.5L801.3,378.6L802.6,378.9L804.7,378.4L804.6,377.1L802.8,376.3L804.1,376.0L805.8,376.6L807.1,377.6L809.2,378.2L809.9,378.0L811.5,378.8L812.9,378.0L813.9,378.3L814.5,377.8L815.6,379.0L815.0,380.4L814.0,381.4L813.1,381.4L813.4,382.4L812.7,383.7L811.8,384.9L812.0,385.6L814.0,387.0L815.9,387.8L817.2,388.7L819.0,390.2L819.7,390.2L821.0,390.8L821.4,391.6L823.8,392.4L825.5,391.6L825.9,390.2L826.4,389.1L826.8,387.7L827.5,385.7L827.2,384.5L827.4,383.8L827.1,382.4L827.4,380.5L827.9,380.0L827.5,379.2L828.1,377.8L828.6,376.5L828.6,375.7L829.6,374.8L830.3,376.0L830.4,377.6L831.1,377.9L831.2,379.0L832.1,380.2L832.3,381.6L832.2,382.5ZM836.8,450.2L839.2,451.1L840.6,450.7L842.5,450.2L844.0,450.4L844.2,453.4L843.3,454.3L843.1,456.3L842.2,455.6L840.5,457.3L839.9,457.2L838.4,457.1L836.9,455.0L836.5,453.3L835.1,451.1L835.1,450.0L836.8,450.2ZM915.6,448.4L914.6,449.7L913.4,451.4L911.5,452.5L911.0,451.8L910.0,451.4L911.4,449.4L910.6,448.0L907.9,447.0L908.0,446.1L909.8,445.2L910.2,443.3L910.1,441.7L909.1,440.0L909.2,439.5L908.0,438.5L906.0,436.3L905.0,434.5L905.9,434.3L907.2,435.7L909.2,436.4L909.9,438.6L911.7,441.2L911.8,439.5L912.9,440.2L913.3,442.1L915.3,442.9L917.0,443.1L918.4,442.2L919.7,442.5L919.0,444.7L918.3,446.1L916.4,446.1L915.7,446.8L915.9,447.9L915.6,448.4ZM897.5,457.1L899.7,455.8L901.2,454.5L902.3,452.7L903.2,452.0L903.6,450.6L905.4,449.4L905.9,450.5L906.5,451.5L908.3,450.5L909.0,451.6L909.0,452.7L908.1,453.8L906.4,455.7L905.1,456.7L906.1,457.9L904.1,457.9L902.0,458.8L901.3,460.5L899.9,463.0L897.9,464.1L896.7,464.8L894.4,464.8L892.7,464.0L890.0,463.8L889.6,462.9L891.0,461.0L894.1,458.5L895.7,458.1L897.5,457.1ZM808.6,351.0L809.3,355.0L811.9,356.5L814.0,353.9L816.9,352.4L819.1,352.4L821.2,353.2L823.1,354.1L825.8,354.6L830.1,356.3L834.7,357.8L836.5,359.0L837.9,360.3L838.2,361.8L842.4,363.3L843.0,364.6L840.7,364.9L841.3,366.6L843.5,368.2L845.1,370.9L846.6,370.8L846.5,371.9L848.4,372.3L847.6,372.8L850.3,373.9L850.0,374.6L848.4,374.8L847.7,374.1L845.6,373.8L843.1,373.5L841.1,371.9L839.7,370.5L838.4,368.3L835.1,367.2L833.0,367.9L831.5,368.7L831.8,370.6L829.8,371.5L828.4,371.0L825.8,370.9L823.6,368.9L821.1,368.4L820.5,369.1L817.3,369.2L818.4,367.1L819.9,366.4L819.3,363.7L818.1,361.6L813.2,359.5L811.1,359.3L807.4,357.0L806.7,358.2L805.7,358.4L805.1,357.5L805.1,356.4L803.2,355.2L805.9,354.3L807.7,354.3L807.5,353.6L803.8,353.6L802.8,352.2L800.6,351.7L799.5,350.5L802.9,349.9L804.2,349.0L808.2,350.1L808.6,351.0ZM854.1,358.9L853.6,360.6L851.9,362.0L848.9,363.9L847.6,363.9L845.5,363.2L844.1,362.5L844.3,361.7L846.5,362.1L847.9,361.9L848.6,360.6L850.3,361.8L852.4,360.0L852.1,358.5L853.6,358.5L854.1,358.9ZM856.1,359.4L855.4,360.0L854.9,358.6L854.3,357.6L853.2,356.8L851.7,355.7L849.9,355.0L850.6,354.4L852.0,355.1L852.8,355.6L853.9,356.2L854.9,357.3L855.8,358.1L856.1,359.4ZM860.2,361.5L861.0,362.0L862.2,363.6L863.4,364.5L863.0,365.2L862.3,365.4L861.2,364.5L860.1,362.9L859.6,361.0L859.9,360.7L860.2,361.5ZM877.5,372.1L877.1,372.6L875.3,370.4L874.8,368.9L875.6,368.9L876.5,370.9L877.5,372.1ZM875.4,372.8L874.5,372.9L872.9,372.6L872.4,372.2L872.6,371.2L874.2,371.6L875.0,372.2L875.4,372.8ZM872.4,368.2L873.0,369.0L873.1,369.5L871.1,368.4L869.8,367.5L868.8,366.7L869.2,366.4L870.4,367.0L872.4,368.2ZM891.4,387.9L892.9,389.3L892.1,389.6L891.3,388.5L891.4,387.9ZM887.8,400.9L889.8,402.4L891.1,403.6L890.2,404.2L888.8,403.5L887.0,402.4L885.4,401.0L883.8,399.3L883.4,398.4L884.5,398.5L885.9,399.3L887.0,400.2L887.8,400.9ZM919.3,391.5L920.2,392.2L919.8,393.5L918.2,393.9L916.8,393.6L916.6,392.5L917.5,391.6L918.7,391.9L919.3,391.5ZM921.8,390.2L920.2,390.7L919.9,389.7L921.1,389.2L921.9,389.1L923.4,388.3L923.4,389.5L921.8,390.2ZM767.9,337.7L766.5,340.0L768.3,342.4L767.9,343.5L770.7,345.8L767.7,346.1L766.9,347.8L767.0,350.1L764.6,351.8L764.5,354.3L763.6,358.1L763.2,357.3L760.3,358.4L759.4,356.9L757.6,356.7L756.3,355.9L753.4,356.8L752.4,355.6L750.8,355.7L748.7,355.4L748.3,352.1L747.1,351.4L745.9,349.3L745.5,347.0L745.8,344.7L747.3,343.1L749.2,343.9L751.1,343.5L751.6,341.3L752.7,340.9L755.7,340.3L757.5,338.4L758.7,336.8L759.7,335.8L761.8,334.5L763.7,332.7L765.0,330.8L766.0,330.8L767.3,332.0L767.4,333.1L769.1,333.8L771.1,334.6L771.0,335.5L769.3,335.7L769.7,336.9L767.9,337.7ZM711.4,334.4L716.8,335.0L719.1,337.4L721.0,339.1L722.4,340.2L724.7,342.8L727.3,342.9L729.4,344.6L730.8,346.7L732.8,347.8L731.8,349.9L733.2,350.8L734.1,350.8L734.5,352.6L735.4,354.0L737.2,354.2L738.4,355.8L737.8,358.9L737.7,362.7L734.9,362.8L732.8,360.7L729.6,358.7L728.5,357.1L726.6,355.1L725.4,353.2L723.5,349.7L721.3,347.6L720.6,345.5L719.6,343.5L717.4,342.0L716.1,339.8L714.2,338.4L711.6,335.7L711.4,334.4ZM744.7,365.1L749.5,365.3L750.1,364.3L754.7,365.5L755.6,367.1L759.4,367.6L762.5,369.1L759.6,370.0L756.8,369.0L754.6,369.1L752.0,368.9L749.6,368.4L746.7,367.5L744.9,367.2L743.9,367.5L739.3,366.5L738.9,365.4L736.6,365.2L738.3,362.9L741.3,363.0L743.3,364.0L744.4,364.2L744.7,365.1ZM773.3,349.4L775.6,351.6L776.9,350.5L781.6,349.7L781.4,350.8L780.3,350.4L779.2,351.9L777.0,352.9L779.3,356.1L778.9,356.9L781.1,359.8L781.1,361.5L779.8,362.2L778.8,361.3L780.0,359.3L777.6,360.2L776.9,359.5L777.3,358.6L775.5,357.1L775.6,354.7L774.0,355.4L774.3,361.9L772.7,362.3L771.6,361.6L772.3,359.3L771.9,356.8L770.9,356.8L770.1,355.1L771.1,353.5L771.5,351.5L772.8,347.7L773.3,346.7L775.4,344.8L777.4,345.6L780.5,345.9L783.4,345.8L785.9,344.0L786.3,344.5L784.3,347.0L782.4,347.5L780.0,347.0L775.9,347.1L773.7,347.5L773.3,349.4ZM785.6,370.4L785.9,369.8L788.1,369.2L789.8,369.1L790.6,368.8L791.6,369.1L790.6,369.8L788.0,370.9L785.9,371.6L784.3,373.5L782.2,374.0L781.9,373.7L782.1,372.9L783.2,371.4L785.6,370.4ZM767.9,368.4L768.8,369.0L770.4,368.8L771.0,369.9L768.1,370.4L766.4,370.7L765.0,370.7L765.9,369.3L767.3,369.3L767.9,368.4ZM780.5,368.3L780.1,369.8L776.3,370.5L773.0,370.2L773.0,369.2L775.0,368.7L776.6,369.5L778.2,369.3L780.5,368.3ZM774.3,373.1L775.2,373.1L775.0,373.7L774.0,373.8L770.6,372.0L772.9,371.5L774.3,373.1ZM793.0,342.7L793.2,344.0L794.7,344.2L795.0,345.3L794.8,347.4L793.5,347.2L793.1,348.7L794.2,350.1L793.5,350.4L792.5,348.8L791.7,345.6L792.2,343.6L793.0,342.7ZM799.4,355.8L800.3,357.8L798.2,356.7L796.1,356.5L794.7,356.7L793.0,356.6L793.6,355.2L796.7,355.1L799.4,355.8ZM790.7,355.9L791.3,356.8L790.4,357.6L788.7,357.1L788.2,356.1L790.7,355.9ZM776.5,301.8L778.1,302.5L778.8,301.8L779.1,302.5L778.6,303.5L779.5,305.3L778.8,307.4L777.4,308.2L777.0,310.3L777.5,312.2L778.9,312.5L780.0,312.2L783.1,313.6L782.9,315.0L783.7,315.6L783.4,316.7L781.5,315.5L780.5,314.2L779.9,315.1L778.3,313.6L776.0,314.0L774.8,313.4L774.9,312.4L775.7,311.7L774.9,311.2L774.6,312.1L773.4,310.6L773.0,309.5L772.9,307.2L773.9,308.0L774.2,304.0L775.0,301.8L776.5,301.8ZM789.2,327.0L789.4,328.7L789.6,330.1L788.7,332.4L787.8,329.9L786.6,331.1L787.4,333.0L786.7,334.1L783.8,332.7L783.1,330.9L783.8,329.7L782.2,328.5L781.5,329.5L780.3,329.4L778.4,330.8L778.0,330.1L779.0,328.0L780.6,327.3L781.9,326.3L782.8,327.5L784.7,326.8L785.1,325.7L786.9,325.6L786.7,323.7L788.8,324.8L789.0,326.1L789.2,327.0ZM771.9,319.6L772.4,321.7L770.8,323.1L769.4,324.8L766.1,327.1L767.3,325.4L769.2,323.9L770.7,322.1L772.0,319.6ZM783.9,316.7L786.3,316.7L787.0,317.7L787.7,320.4L785.7,319.8L785.8,320.6L786.4,322.2L785.2,322.7L785.1,321.0L784.4,320.8L784.0,319.3L785.4,319.5L785.4,318.6L783.9,316.7ZM781.0,320.1L781.0,319.1L779.8,318.4L778.2,318.3L778.1,320.8L778.3,322.0L779.5,321.7L780.3,322.4L780.6,320.9L782.0,320.7L781.6,322.4L783.4,320.0L783.2,322.4L782.3,323.2L781.5,324.8L779.7,323.1L780.3,322.4L781.0,320.1ZM777.0,315.4L776.4,317.5L775.3,316.3L774.0,314.4L776.2,314.5L777.0,315.4ZM777.7,287.1L776.2,291.1L775.1,293.1L773.8,291.0L773.5,289.1L774.9,286.7L777.0,284.8L778.1,285.5L777.7,287.1ZM677.6,329.3L677.2,331.9L676.1,332.6L674.0,333.2L672.8,331.2L672.3,327.6L673.5,323.5L675.2,324.9L676.3,326.7L677.6,329.3ZM825.7,255.1L824.8,257.1L825.2,258.4L823.9,260.1L820.7,261.3L816.3,261.5L812.7,264.3L811.0,263.4L810.9,261.5L806.6,262.0L803.6,263.2L800.7,263.3L803.2,265.1L801.6,269.4L800.0,270.4L798.7,269.5L799.4,267.2L797.8,266.5L796.8,264.8L799.1,264.0L800.4,262.4L802.9,261.1L804.8,259.4L809.8,258.7L812.4,259.2L815.1,254.7L816.7,255.9L820.4,253.4L821.8,252.4L823.4,249.4L823.0,246.6L824.0,245.0L826.7,244.5L828.0,248.0L828.0,250.0L825.7,252.6L825.7,255.1ZM833.0,237.5L834.8,238.1L836.6,237.0L837.1,239.8L833.4,240.5L831.2,243.0L827.3,241.3L825.9,244.0L823.2,244.1L822.8,241.6L824.0,239.6L826.7,239.5L827.4,236.0L828.2,234.1L831.1,236.7L833.0,237.5ZM809.8,262.6L810.2,263.5L808.7,265.0L807.7,264.2L806.4,264.8L805.8,266.3L804.1,265.5L804.2,264.3L805.5,262.8L807.0,263.1L808.0,262.1L809.8,262.6Z"/></g>
<g fill="none" stroke="#fbfbfb" stroke-width="0.9" stroke-linejoin="round" stroke-linecap="round"><path d="M294.3,318.6L292.7,319.0L292.0,320.3L291.1,321.0L290.3,321.9L290.0,323.7L289.4,325.2L290.6,325.3L291.0,326.5L291.5,327.0L291.7,328.1L291.4,329.0L291.5,329.5L292.1,329.7L292.7,330.6L296.0,330.4L297.4,330.7L299.2,332.8L300.2,332.6L302.0,332.7L303.4,332.4L304.3,332.8L303.8,334.2L303.3,335.0L303.1,336.8L303.6,338.5L304.3,339.2L304.4,339.8L303.1,341.0L304.0,341.6L304.7,342.5L305.4,345.0M305.4,345.0L305.0,345.3L304.5,343.8L303.8,343.0L303.0,343.9L298.1,343.8L298.1,345.4L299.6,345.6L299.5,346.6L299.0,346.3L297.6,346.7L297.6,348.6L298.7,349.5L299.1,350.9L299.0,352.0L297.9,358.9M297.9,358.9L296.7,357.5L295.9,357.5L297.5,354.9L295.6,353.8L294.1,354.0L293.2,353.5L291.8,354.2L289.9,353.9L288.5,351.3L287.3,350.6L286.5,349.4L284.8,348.3L284.2,348.5M284.2,348.5L283.1,347.9L281.9,347.0L281.2,347.4L279.1,347.1L278.4,346.0L278.0,346.1L275.5,344.6M284.2,348.5L284.5,350.4L283.8,352.0L281.0,354.6L278.0,355.6L276.5,357.8L276.0,359.5L274.6,360.5L273.6,359.2L272.5,359.0L271.5,359.2L271.4,358.3L272.1,357.7L271.8,356.6M305.4,345.0L306.8,346.3L308.8,346.1L309.3,345.3L311.1,344.8L312.1,344.4L312.4,343.3L314.2,342.6L314.1,342.1L312.0,341.8L311.6,340.3L311.7,338.6L310.6,337.9L311.1,337.7L312.9,338.0L314.9,338.7L315.7,338.1L317.4,337.7L320.2,336.7L321.2,335.8L320.8,335.1M320.8,335.1L319.1,333.2L319.8,332.5L319.8,331.3L321.3,330.9L321.9,330.5L321.1,329.6L321.3,328.6L323.3,327.1M320.8,335.1L322.1,335.0L322.7,335.6L322.4,336.7L323.2,337.0L323.8,338.2L323.1,339.1L322.7,341.2L323.4,342.5L323.5,343.6L325.1,344.8L326.3,344.9L326.6,344.4L327.4,344.3L328.5,343.9L329.3,343.2L330.7,343.4L331.3,343.3M331.3,343.3L329.8,341.2L329.5,339.8L328.7,339.8L327.6,337.9L328.0,336.6L327.9,336.1L329.4,335.4L329.8,333.2M331.3,343.3L332.7,343.5L332.9,343.0L332.5,342.5L332.7,341.8L333.7,342.0L334.9,341.8L336.4,342.3M336.4,342.3L337.0,341.3L337.2,340.1L337.7,339.0L336.7,337.6L336.5,335.8L337.8,333.7M336.4,342.3L337.5,342.8L338.2,342.1L338.8,342.3L339.1,343.0L340.3,342.8L341.3,341.8L342.1,340.0L343.5,337.7M297.9,358.9L295.7,358.7L293.2,359.6L290.4,361.3L290.2,362.5L289.6,363.3L289.8,364.7L288.3,365.4L288.3,366.5L287.6,366.9L288.7,369.2L290.1,370.7L289.5,371.8L291.2,371.9L292.2,373.3L294.4,373.3L296.4,371.9L296.3,375.7L297.4,375.9L298.8,375.5M298.8,375.5L301.0,379.5L300.4,380.4L300.3,382.1L300.3,384.3L299.3,385.5L299.7,386.4L299.2,387.3L300.2,389.4L298.7,392.1M298.7,392.1L298.0,393.4L296.7,394.0M298.8,375.5L300.7,375.7L302.0,375.7L302.5,374.9L304.7,373.9L306.0,373.0L309.3,372.5L309.0,374.4L309.3,375.4L309.1,377.1L311.8,379.3L314.7,379.7L315.7,380.6L317.3,381.1L318.4,381.9L320.0,381.8L321.4,382.6L321.5,384.0L322.0,384.8L322.0,385.8L321.3,385.9L322.3,388.8L327.1,388.9L326.7,390.4L327.0,391.3L328.3,392.0L328.9,393.6L328.5,395.6L327.8,396.7L328.0,398.1L327.2,398.6M327.2,398.6L327.2,397.8L324.9,396.6L322.6,396.5L318.2,397.2L317.0,399.4L316.9,400.8L315.9,403.8M315.9,403.8L315.5,403.2L312.7,403.1L311.7,405.2L310.2,403.4L307.0,402.7L304.9,405.0M304.9,405.0L303.1,405.3L302.1,401.9L300.7,399.1L301.5,396.7L300.2,395.6L299.9,393.8L298.7,392.1M304.9,405.0L305.2,405.6L304.3,408.2L301.6,409.5L301.7,413.7L301.2,414.5L301.9,415.4L300.1,417.0L298.5,419.3L297.6,421.6L297.8,424.0L296.3,426.6L297.5,430.9L298.1,431.4L298.1,433.7L296.7,436.1L296.7,438.2L294.8,439.9L294.8,442.2L295.6,444.6L294.1,445.5L293.4,447.7L292.8,450.3L293.2,453.4L292.2,453.9L292.8,456.8L294.0,457.7L293.1,458.8L294.3,459.3L294.6,460.2L293.5,460.7L293.8,462.1L292.8,465.4L291.5,467.6L291.8,468.8L291.0,470.4L289.1,471.5L289.3,474.2L290.2,475.1L291.8,475.0L291.8,476.8L292.8,478.3L298.9,478.6L301.2,479.0M301.1,479.9L301.1,485.4M315.9,403.8L320.5,407.9L322.6,408.2L325.6,410.1L328.2,411.1L328.6,412.2L326.1,416.0L328.6,416.7L331.4,417.1L333.4,416.7L335.7,414.7L336.1,412.5M336.1,412.5L336.6,411.1L337.0,409.6L337.0,408.2L336.1,407.8L335.1,408.2L334.2,408.1L333.9,407.1L333.6,404.8L333.2,404.1L331.5,403.4L330.5,403.9L327.8,403.4L328.0,400.0L327.2,398.6M336.1,412.5L338.6,413.5L338.6,415.5L336.5,416.9L334.8,417.9L331.9,420.3L328.6,423.7M328.6,423.7L328.0,425.7L327.3,428.3L327.3,430.8L326.8,431.3L326.6,433.0M328.6,423.7L330.2,423.5L332.7,425.4L333.7,425.3L336.3,426.9L338.2,428.3L339.7,430.0L338.6,431.2L339.3,432.6M242.0,311.7L242.1,311.0L242.3,310.4L242.0,309.9L243.2,307.9L246.4,307.9L246.5,307.0L246.1,306.9L245.8,306.3L244.9,305.7L243.9,304.9L245.1,304.9L245.1,303.5L247.4,303.5L249.7,303.5L249.7,303.1L251.3,301.8L251.8,301.8M249.7,303.5L249.7,305.5L249.5,308.3L250.2,308.3M252.0,308.7L250.9,309.7L249.7,310.4L249.5,310.9L249.7,311.4L249.2,312.0L248.6,312.2L248.7,312.5L248.3,312.7L247.4,313.4L247.3,313.7M249.2,312.0L249.9,312.2L250.5,312.7L251.2,313.1L251.3,313.4L252.4,313.2L252.9,313.3L253.3,313.6L253.1,314.6M254.3,315.6L255.1,315.5L255.4,314.9L255.8,314.9L255.7,313.7L256.3,313.6L256.8,313.6L257.3,313.0L258.1,313.5L258.3,313.2L258.8,312.9L259.7,312.2L259.7,311.7L260.0,311.7L260.3,311.1L260.5,311.0L261.0,311.4L261.5,311.5L262.0,311.2L262.6,311.2L263.5,310.9L263.9,310.5L264.7,310.6M258.3,320.3L258.7,320.0L260.3,320.7L260.9,320.4L261.7,320.6L262.1,321.1L262.8,321.2L263.4,320.7M266.2,324.1L265.3,324.4L265.3,325.4L265.8,325.7L265.4,326.0L265.5,326.5L265.3,327.0L265.2,327.5M293.3,298.8L293.6,300.1L293.4,301.1L292.7,301.5L293.4,302.2L293.3,302.9M467.4,260.1L468.4,261.7L468.5,263.2L469.4,265.9L470.0,266.4L469.6,267.4L466.3,267.8L465.2,268.7L463.7,268.9L463.6,270.8L460.7,271.8L459.7,273.0L457.7,273.7L455.2,274.1L451.1,275.9L451.1,278.9M451.1,278.9L450.8,278.9L450.8,280.2L449.3,280.3L448.5,280.9L447.3,280.9L446.4,280.5L444.3,280.8L443.5,282.8L442.7,282.9L441.6,286.1L438.1,288.8L437.2,292.3L436.2,293.4L435.9,294.3L430.3,294.5M451.1,278.9L451.1,279.5L451.1,283.3L442.9,283.2L443.0,289.6L440.6,289.8L440.0,291.1L440.5,294.7L430.7,294.7L430.1,295.5M451.1,279.5L460.5,285.6M460.5,285.6L456.7,285.6L457.9,296.4L459.1,307.2L459.5,307.6L459.0,309.3L448.9,309.3L448.6,309.9L447.6,309.7L446.2,310.2L444.4,309.5L443.6,309.6L443.2,311.1L442.4,311.5M442.4,311.5L440.7,309.8L439.2,308.0L437.5,307.3L436.3,306.6L434.9,306.6L433.7,307.1L432.5,306.9L431.6,307.7M460.5,285.6L469.0,291.1L477.4,296.5L478.0,297.7L479.5,298.4L480.7,298.8L480.7,300.4L483.5,300.1M483.5,300.1L487.1,299.0L494.3,294.1L502.9,289.4M502.9,289.4L501.8,287.8L499.8,286.6L498.6,287.1L497.7,285.7L497.6,284.6L496.2,282.8L497.2,281.7L496.9,280.2L497.3,278.8L497.1,277.7L497.5,275.6L497.4,274.5L496.6,272.2M496.6,272.2L495.5,267.8L494.0,266.7L493.9,266.1L491.9,264.6L491.7,262.7L493.2,261.3L493.8,259.3L493.4,256.9L493.9,255.6M496.6,272.2L497.8,271.7L498.0,270.6L497.7,269.6L499.5,268.6L500.2,267.8L501.4,267.1L501.6,265.2M502.9,289.4L506.8,290.4L508.2,291.8L510.0,290.9L512.5,289.5L522.5,294.3L532.5,299.1M532.5,299.1L532.5,298.0L535.4,298.0L535.4,293.0L535.4,283.8L535.4,274.9L534.7,272.9L535.3,271.4L534.9,270.3L535.8,269.1M510.0,290.9L510.6,294.8L511.6,295.4L511.6,296.2L512.6,297.1L512.1,298.1L511.1,303.2L511.0,306.5L507.8,308.9L506.7,312.1L507.8,313.1L507.8,314.7L509.4,314.7L509.1,315.9M535.4,293.0L545.5,293.0L555.2,293.0L565.1,293.0M532.5,299.1L532.6,309.0L530.5,308.9L529.3,310.7L528.7,312.2L529.2,312.8L528.4,313.6L528.7,314.6L528.0,315.7L527.8,316.6L528.6,316.4L529.2,317.4L529.2,318.9L530.1,319.6L530.1,320.2M483.5,300.1L483.5,305.9L482.2,307.6L482.0,309.1L479.7,309.5L476.3,309.8L475.4,310.6L473.8,310.7M473.8,310.7L472.2,310.8L471.5,310.3L470.2,310.6L467.8,311.7L467.4,312.4L465.4,313.6L465.1,314.2L464.0,314.7L462.8,314.4L462.1,315.0L461.8,316.7L459.8,318.8L459.8,319.6L459.1,320.7M459.1,320.7L459.3,322.1L458.3,322.5L457.7,322.8L457.3,321.8L456.6,322.0L456.1,322.0L455.7,322.7L453.8,322.7L453.1,322.3L452.7,322.5L452.0,321.8L452.1,321.1L451.8,320.8L451.3,321.0L451.4,320.2L451.9,319.6L450.8,318.5L450.5,317.8L450.0,317.3L449.5,317.2L448.9,317.6L448.1,317.9L447.4,318.5L446.3,318.3L445.6,317.6L445.2,317.5L444.6,317.9L444.2,317.9L444.0,317.0L444.1,316.2L443.9,315.2L443.0,314.5L442.5,313.1L442.4,311.5M444.0,317.0L443.7,317.1L442.3,316.9L442.1,317.2L441.6,317.2L439.8,316.6L438.5,316.6L433.9,316.5L433.2,316.8L432.4,316.7L431.1,317.1M430.7,315.2L433.0,315.2L433.6,314.9L434.0,314.9L434.9,314.3L436.0,314.8L437.1,314.9L438.2,314.3L437.7,313.6L436.8,314.0L436.1,314.0L435.1,313.4L434.3,313.4L433.7,314.0L431.0,314.1M438.5,316.6L438.5,317.4L438.2,317.7L438.4,318.5L438.0,318.9L437.5,318.9L436.8,319.3L436.1,319.2L435.0,320.5M439.7,325.8L441.0,324.7L441.3,324.0L441.7,323.4L442.4,323.4L443.0,322.9L445.0,322.9L445.7,323.8L446.3,324.9L446.2,325.6L446.6,326.3L446.5,327.2L447.2,327.0M447.2,327.0L446.1,328.2L444.9,329.6L444.8,330.3L444.2,331.1M447.2,327.0L448.4,326.7L449.5,328.3L449.3,329.3L449.8,329.8L450.5,329.8L451.0,328.8L451.7,328.9M451.7,328.9L451.6,329.6L451.8,330.8L451.3,331.9L452.0,332.6L452.8,332.8L453.9,333.8L454.0,334.8L453.7,335.1L453.5,337.2M451.7,328.9L452.1,328.9L452.3,327.8L452.1,327.3L452.3,326.9L453.2,326.6L452.6,324.6L452.0,323.6L452.2,322.7L452.7,322.5M465.7,335.6L464.7,332.5L465.4,329.6L466.4,327.5L465.8,324.0L465.4,322.1M465.4,322.1L462.0,324.0L460.9,323.5L460.5,322.7L459.3,322.1M465.4,322.1L465.5,320.7L469.8,320.5L470.9,320.7L471.7,320.3L472.9,320.5M472.9,320.5L472.7,321.3L473.8,322.6L473.8,324.4L474.0,326.4L474.6,327.3L474.1,329.6L474.3,330.8L474.9,332.4L475.5,333.3M475.1,320.6L474.8,321.9L475.5,322.6L476.4,323.5L476.5,324.7L477.0,325.2L476.9,331.0L477.5,332.7M472.9,320.5L475.1,320.6L475.9,320.3L476.5,319.2L477.7,319.0L478.2,318.2M478.2,318.2L478.3,316.5L475.4,315.9L475.3,314.7L473.9,313.1L473.6,312.0L473.8,310.7M479.6,332.4L479.7,328.4L479.6,326.8L480.1,325.2L480.9,324.5L482.1,322.9L481.9,322.2L482.4,321.2L481.8,319.7L481.9,318.9M478.2,318.2L479.1,317.5L480.0,317.5L481.9,318.9M481.9,318.9L482.1,316.7L482.8,315.7L483.1,314.2L483.8,313.7L486.5,313.4L489.0,314.3L489.9,315.3L491.2,315.3L492.4,314.7L495.4,316.0L496.7,315.9L498.1,314.9L499.6,314.9L500.3,314.6L501.7,314.7L503.6,315.5L505.6,314.1L506.2,314.2L507.9,316.9L508.3,316.9M494.1,336.2L494.8,334.4L495.9,332.0L496.7,332.0L498.2,330.5L499.1,330.4L500.5,331.5L502.3,330.6L502.5,329.6L503.0,328.6L503.4,327.3L504.8,326.3L505.3,324.5L505.8,324.0L506.2,322.7L506.8,321.1L508.9,319.1L509.1,318.3L509.3,317.8L508.3,316.9L508.4,316.1L509.1,315.9M509.1,315.9L510.1,317.5L510.3,319.2L510.2,320.8L511.6,323.1L510.2,323.1L509.5,323.3L508.3,323.0L507.8,324.2L509.2,325.6L510.3,326.1L510.7,327.1L511.5,328.9M511.5,328.9L511.1,329.5L513.2,329.3L513.6,328.7L514.0,328.8L514.7,329.3L517.8,328.4L518.9,327.4L520.2,326.5L519.9,325.6L520.6,325.4L523.1,325.5L525.4,324.4L527.2,321.6L528.5,320.6L530.1,320.2M511.1,329.5L509.8,332.1L509.2,332.5L509.0,334.5L509.3,335.5L509.1,336.3L510.3,337.6L510.5,338.5L511.4,339.7L512.5,340.6L512.9,342.4M497.0,342.4L501.1,342.4L501.1,345.4L497.4,345.4L496.6,345.6M501.1,342.4L502.3,342.3L503.8,342.6L505.3,342.3L505.6,342.4L508.7,342.5L510.8,343.2L512.7,343.8L512.9,342.4M500.6,358.1L502.5,356.7L501.6,355.0L502.4,354.4L504.1,354.1L504.3,353.0L505.7,354.2L507.9,354.3L508.6,353.1L509.0,351.4L508.7,349.5L507.5,348.0L508.6,345.1L508.0,344.6L506.1,344.8L505.4,343.5L505.6,342.4M503.3,362.6L504.0,362.3L504.1,361.2L504.5,360.6L505.4,360.1L504.4,359.2L503.7,359.6L502.7,360.7M505.4,360.1L506.0,360.3L506.9,359.4L508.2,359.4L508.4,360.1L509.3,360.5L510.8,359.0L512.3,357.8L512.9,357.0L512.8,354.9L513.9,352.5L515.1,351.2L516.7,350.0L517.0,349.2L517.0,348.3L517.5,347.4L517.3,345.9L517.6,343.7L518.1,342.2L518.9,340.8L519.0,339.3M512.9,342.4L514.2,340.1L515.7,338.8L517.4,339.2L519.0,339.3M519.0,339.3L519.2,337.6L520.2,336.3L521.6,335.5L523.6,336.4L525.2,337.3L527.1,337.5L528.9,338.0L529.7,336.5L530.0,336.3L531.2,336.6L533.9,335.3L534.9,335.8L535.7,335.8L536.1,335.2L537.0,334.9L538.9,335.2L540.5,335.3L541.3,335.0M530.1,320.2L530.4,321.3L531.8,322.8L531.8,323.9L531.4,324.9L531.6,325.7L532.4,326.4L534.3,327.5L535.7,328.5L535.7,329.3L537.4,330.6L538.4,331.7L539.1,333.2L540.9,334.2L541.3,335.0M532.6,326.5L533.4,326.2L534.3,325.8L534.9,323.5L535.6,322.4L537.4,322.0L537.8,322.7L539.1,324.2L539.8,324.4L540.7,324.0L542.5,324.1L542.8,324.6L545.4,324.6L545.4,324.1L546.7,323.6L547.0,322.9L547.9,322.3L550.0,323.8L551.3,323.5L552.6,321.7L553.9,320.4L553.7,318.9L553.1,318.1L554.6,318.0L554.8,317.4L556.0,317.6L555.7,319.5L556.0,321.3L557.2,322.2L557.5,323.1L557.5,324.4L557.8,324.4L557.9,326.4M557.8,324.1L558.6,321.5L559.8,320.8L560.0,319.8L561.1,317.9L562.6,316.6L563.6,314.2L564.0,312.0M564.0,312.0L563.7,311.0L564.8,307.3L565.1,305.6L565.9,304.9L567.7,304.5L569.0,303.0M564.0,312.0L566.9,312.5L567.7,310.7L569.2,311.8L570.7,311.2L571.3,311.7L573.0,311.8L575.2,312.8L575.9,313.6L577.0,314.4L578.0,315.9L578.8,316.7M578.8,316.7L579.9,316.9L580.7,316.3M578.8,316.7L577.1,319.0L577.3,319.7L577.4,320.4L578.7,320.5L579.3,320.3L579.9,320.7L579.4,321.6L580.3,323.0M579.9,320.7L580.8,319.4M580.3,323.0L581.2,324.2L582.2,325.1L590.4,328.1L592.5,328.1L585.4,335.6L582.1,335.7L579.9,337.5L578.3,337.5L577.6,338.3M577.6,338.3L575.4,341.1L575.4,350.3L576.9,352.3M577.6,338.3L575.9,338.3L574.9,337.4L572.6,338.5L571.9,339.5L570.2,339.3L569.6,339.0L569.1,339.1L568.3,339.1L565.1,337.0L563.3,337.0L562.5,336.1L562.5,334.7L561.2,334.3M557.9,326.4L557.5,327.1L556.2,327.2L555.3,328.6L556.9,328.8L558.1,330.0L558.6,331.0L559.7,331.6L561.2,334.3M561.2,334.3L559.5,336.0L558.0,337.5M558.0,337.5L556.4,338.6L554.7,338.6L552.6,339.2L551.1,338.6L550.0,339.3M550.0,339.3L547.8,337.7L547.2,336.6L545.8,337.1L544.7,336.9L544.0,337.4L542.9,337.1L541.3,335.0M558.0,337.5L559.1,339.2L559.4,340.5L560.5,343.3L559.6,345.1L558.4,346.8L557.7,347.8L557.7,350.5M557.7,350.5L558.1,350.8L567.2,355.9L567.4,357.3L571.0,359.8M557.7,350.5L552.6,350.7L549.9,350.6L549.0,350.9L547.5,351.7L546.9,351.5M546.9,351.5L546.9,349.6L547.5,348.6L547.6,346.6L548.2,345.4L549.1,344.1L550.1,343.5L550.9,342.6L549.9,342.2L550.0,339.3M546.9,351.5L546.2,352.2L546.1,353.7L545.7,353.8L545.5,355.2L546.1,356.3L546.3,359.4L546.7,361.7L546.5,363.0L547.0,364.4L548.4,365.8L549.8,369.0M549.0,350.9L550.0,352.4L549.8,353.8L549.1,354.1M549.1,354.1L549.3,355.1L549.8,355.7L549.8,356.5L549.2,357.0L548.2,358.3L547.3,359.2L546.3,359.4M549.1,354.1L547.8,354.0L547.0,355.4L545.5,355.2M549.8,369.0L550.8,369.6L551.8,370.0L553.4,370.5L554.8,371.2M554.8,371.2L557.3,371.7L557.8,372.4L558.6,373.5L559.3,376.9M559.3,376.9L561.2,376.7L564.2,377.4L564.9,377.1L566.6,377.1L567.5,376.3L569.0,376.4L571.8,375.4L573.8,373.9M549.8,369.0L548.8,368.7L545.4,369.2L544.8,369.5L544.1,371.0L544.6,372.2L544.2,375.1L543.9,377.6L544.5,378.1L546.3,379.0L547.0,378.6L547.2,381.3L545.3,381.3L544.2,379.9L543.3,378.8L541.4,378.5L540.8,377.2L539.3,377.9L537.3,377.6L536.5,376.5L534.9,376.2L533.7,376.3L533.6,375.5L532.7,375.5M532.7,375.5L531.6,375.3L530.0,375.7L528.9,375.6L528.3,375.8L528.4,372.9L527.6,371.9L527.4,370.4L527.8,368.9L527.3,367.9L527.2,366.3L524.2,366.4L524.4,365.5L523.1,365.5L523.0,365.9L521.4,366.0L520.8,367.5L520.4,368.1L519.0,367.7L518.2,368.1L516.6,368.3L515.6,367.0L515.0,366.2L514.3,364.7L513.7,362.8L506.3,362.8L505.4,363.1L504.7,363.0L503.7,363.4M532.7,375.5L533.0,376.2L532.7,377.4L533.1,378.6L532.7,379.6L533.0,380.4L527.7,380.4L527.6,388.3L529.3,390.4L531.0,392.0M502.2,391.4L503.4,390.9L504.9,390.5L506.5,390.6L508.0,391.7L508.4,391.5L518.5,391.4L520.3,392.6L526.4,393.0L531.0,392.0M531.0,392.0L533.0,391.4L534.6,391.5L535.6,392.1L535.6,392.3L534.2,392.9L533.5,392.9L531.9,393.9L530.9,392.8L527.1,393.7L525.2,393.8L525.1,402.7L522.6,402.8L522.6,410.1L522.6,419.3L520.4,420.6L519.0,420.8L517.5,420.3L516.4,420.1L515.9,419.1L514.9,418.4L513.7,419.6M522.6,410.1L523.3,410.5L524.8,412.9L524.6,414.4L525.1,415.3L526.9,415.0L528.2,413.9L529.4,413.1L530.0,411.9L531.2,411.4L532.2,411.7L533.4,412.4L535.5,412.5L537.1,411.9L537.3,411.1L537.8,409.9L539.1,409.7L539.9,408.8L540.7,407.1L543.0,405.2L546.5,403.4M546.5,403.4L544.9,402.3L543.0,401.9L542.2,400.3L542.2,399.4L541.2,399.1L538.3,396.4L537.5,394.9L537.0,394.5L536.1,392.5L535.6,392.3M536.1,392.5L538.9,392.8L539.7,393.1L540.5,393.0L541.9,391.4L544.1,389.3L545.0,389.1L545.3,388.2L546.7,387.2L548.6,386.9M548.6,386.9L548.4,385.1L556.0,383.1M556.0,383.1L554.7,382.4L555.4,380.1L556.2,379.2L555.7,377.2L556.2,375.1L556.7,374.5L556.0,372.3L554.8,371.2M556.0,383.1L557.4,384.3L558.1,384.0L559.1,384.7L559.2,385.7L558.7,386.8L558.9,388.6L560.5,390.2L561.3,388.4L562.4,387.9L562.2,384.7L561.1,382.9L560.2,382.1L559.3,382.1L558.6,378.8L559.3,376.9M548.6,386.9L550.9,387.8L552.0,388.3L552.6,388.9L553.8,389.1L555.1,389.9L555.1,393.1L554.6,394.8L554.5,396.7L554.9,397.5L554.6,398.9L554.2,399.2L553.5,401.0L550.9,403.8M550.9,403.8L549.6,403.5L548.7,403.8L547.5,403.4L546.5,403.4M550.9,403.8L552.1,407.3L552.8,409.1L552.3,411.9L552.5,412.8L553.1,415.0L555.0,415.0M552.5,412.8L551.3,412.3L550.5,412.5L550.3,413.2L549.6,414.2L549.7,415.0L551.1,416.4L552.6,416.1L553.1,415.0M545.4,420.6L546.3,421.3L545.5,422.5L545.1,423.4L543.6,423.8L543.2,424.6L542.3,424.8L540.4,422.9L541.7,421.3L543.1,420.3L544.3,419.8L545.4,420.6M450.2,243.3L451.1,242.6L452.2,242.3L452.8,243.5L454.3,243.5L454.7,243.2L456.1,243.3L456.8,244.5L455.7,245.2L455.7,247.2L455.2,247.5L455.1,248.7L454.1,248.9L455.1,250.4L454.4,252.1L455.2,252.8L454.9,253.5L454.0,254.4L454.2,255.2M468.1,239.4L469.1,240.4L473.7,241.5L474.6,241.0L477.4,242.1L480.3,241.8M490.0,233.0L489.1,231.9L487.9,232.3L488.0,231.1L489.8,229.7L489.7,229.1L490.8,229.3L491.5,228.9M479.1,220.1L479.5,220.9L480.6,221.0L481.8,222.0L483.6,223.2L484.9,223.0L487.0,224.1L487.6,224.4L488.3,224.3M481.1,219.6L483.0,219.8L485.3,219.2L486.9,220.3L488.3,220.9M488.0,222.6L487.3,222.7L487.0,224.1M496.8,229.1L496.9,229.6L496.6,230.2L497.7,230.7L499.0,230.7M506.9,225.8L508.7,226.6L510.1,225.6L511.0,225.4L513.0,226.1L514.1,226.0L515.3,226.5M515.3,226.5L515.1,226.8L515.3,227.7L515.1,228.7L513.7,228.7L514.2,229.2L513.4,230.8M513.4,230.8L512.9,231.3L510.7,231.3L509.5,231.9L507.4,231.7M507.7,234.0L508.9,234.3L509.4,233.9L510.2,234.3L511.2,234.3L511.2,233.6L512.1,233.4L512.3,232.4L514.3,231.7L513.8,230.9L513.4,230.8M510.4,220.2L511.6,221.0L513.5,221.2L513.3,221.9L514.7,222.4L515.1,221.8L516.8,222.0L517.0,222.8L518.9,223.0L520.0,224.2M520.0,224.2L519.3,224.2L518.9,224.7L518.3,224.8L518.1,225.4L517.7,225.5L517.6,225.7L516.8,226.0L515.6,225.9L515.3,226.5M520.0,224.2L520.2,224.4L521.2,224.0L522.5,224.9L524.0,224.4L525.1,224.6L526.9,224.3L529.3,225.2M529.3,225.2L529.9,225.4L529.2,224.3L531.5,222.2L532.7,221.9L533.0,221.2L531.7,219.0M531.6,213.2L531.0,212.4L529.7,212.1M525.6,207.9L528.4,207.1L532.6,207.3L535.1,207.0L535.4,207.5L536.7,207.7L539.1,208.9M533.7,203.5L535.8,203.0L536.9,203.3L539.1,204.2L541.1,204.3M515.3,227.7L516.6,228.3L517.5,228.6L519.6,228.3L519.8,227.8L520.8,227.7L522.0,227.3L522.3,227.5L523.5,227.1L524.1,226.6L524.9,226.4L527.6,227.2L528.1,226.9M528.1,226.9L528.6,225.9L529.3,225.2M528.1,226.9L529.5,227.6L529.7,228.3M529.7,228.3L528.2,228.8L527.0,230.5L525.5,232.2L523.5,232.6M523.5,232.6L521.9,232.5L520.0,233.2M520.0,233.2L519.0,233.6L517.0,233.1L515.1,232.0L514.3,231.7M529.7,228.3L530.8,227.7L532.3,228.0L533.9,228.0L535.1,228.6L535.9,228.2L537.8,228.0L538.4,227.4L539.5,227.4M539.5,227.4L540.2,227.7L541.0,228.4L541.8,229.4L543.2,230.9L543.3,232.0L543.0,233.1L543.5,234.2M543.5,234.2L544.6,234.7L545.8,234.3L546.9,234.7M539.5,227.4L540.1,227.0L541.7,226.8L543.6,227.6L544.6,227.7L545.7,228.3L545.6,229.2L546.5,229.6L546.8,230.6L547.7,231.3L547.5,231.6L548.0,231.9L547.3,232.1L545.9,232.0L545.6,231.7L545.1,231.9L545.3,232.3L544.6,233.1L544.2,234.0L543.5,234.2M544.3,238.7L542.8,238.4L541.0,237.5L538.1,238.1L536.8,238.7L533.2,238.6L531.2,238.2L530.3,238.4L529.6,237.4M529.6,237.4L529.1,236.9L529.7,236.5L529.1,236.2L528.3,236.8L526.8,236.0L526.6,235.0L525.1,234.4L524.8,233.6L523.5,232.6M520.0,233.2L520.6,234.2L521.4,234.9L520.4,235.8M520.4,235.8L519.3,235.3L517.5,235.3L515.4,234.9L514.2,234.9L513.7,235.5L512.8,234.9L512.3,235.9L513.5,237.1L514.0,237.9L515.2,238.8L516.1,239.3L517.1,240.4L519.3,241.3L519.0,241.8M520.4,235.8L521.3,235.8L520.7,236.9L521.9,237.9L521.5,239.0L520.9,239.2M520.9,239.2L520.5,239.4L519.7,240.0L519.3,241.3M520.9,239.2L521.6,239.6L522.0,239.9L522.8,240.2L523.8,240.7L523.1,241.5M521.3,243.3L521.1,242.5L522.2,241.2L522.4,241.7L523.1,241.5M523.1,241.5L523.6,242.2L524.2,242.4L524.4,243.3M524.4,243.3L524.1,244.2L524.4,245.3L525.5,245.9M525.5,245.9L525.4,246.5L524.6,246.9L524.5,247.7L523.3,248.9M525.5,245.9L527.1,245.7L528.1,245.1L529.4,245.2L529.8,244.7L530.3,244.6M530.3,244.6L532.1,244.7L534.1,244.0L535.9,244.9L538.2,244.7L538.2,243.4M538.1,245.9L538.6,245.6L539.4,244.1L538.2,243.4M538.2,243.4L540.8,242.6L542.9,242.9M530.3,244.6L530.1,243.0L528.9,242.2M528.9,242.2L529.3,241.8L529.0,241.5L529.4,240.7L530.4,239.9L529.2,238.9L528.9,237.9L529.6,237.4M528.9,242.2L527.7,242.2L526.9,242.3L526.3,242.4L524.4,243.3M523.1,241.5L523.6,240.9L524.2,240.8L524.5,239.9L524.9,239.8L525.3,240.1L525.8,240.3L526.1,240.7L526.5,240.8L527.0,241.3L527.4,241.3L527.1,241.9L526.8,242.2L526.9,242.3M500.4,200.8L501.5,199.3L503.6,197.6L504.5,194.7L502.9,193.4L502.7,190.1L504.3,187.7L506.8,187.8L507.7,186.8L506.8,185.9L510.7,182.4L513.2,179.6L514.8,177.9L517.2,177.9L517.9,176.5L522.6,176.9L523.0,175.2L524.5,175.1M524.5,175.1L527.9,176.3L531.8,178.0L531.8,181.9L532.7,182.9M524.5,175.1L526.0,174.5L528.8,175.8L532.1,175.7L534.8,176.3L537.1,175.2L538.4,173.3L542.2,172.5L545.5,173.5L544.4,175.2M563.3,258.4L564.0,257.9L564.7,257.3L564.8,255.9L565.6,256.4L568.4,255.7L569.7,256.2L571.8,256.2L574.6,255.3L576.0,255.3L578.8,254.9M578.8,254.9L579.9,254.5L582.8,254.8L583.7,255.5L584.9,255.1M584.9,255.1L583.5,253.1L584.0,252.3L583.2,249.4L584.9,248.7M584.9,248.7L584.0,248.0L582.1,247.4L582.3,246.1L581.9,245.3M581.9,245.3L579.5,244.0L576.8,244.1M581.9,245.3L585.4,244.9L585.5,245.0L586.0,244.5L587.9,245.2L589.2,245.3L589.6,245.0L588.4,243.7L589.0,243.3M585.5,245.0L585.9,245.5L586.9,246.0L586.4,246.6L587.7,247.4L587.0,248.2L588.1,248.9L589.2,249.3L589.3,251.1M589.3,251.1L588.3,251.1L587.3,249.7L587.3,249.3L586.2,249.3L585.5,248.6L584.9,248.7M589.3,251.1L592.2,249.2L593.1,249.0L593.9,249.8L593.0,251.0L594.6,252.3L595.2,252.2M578.8,254.9L577.6,256.5L576.2,257.1L576.4,258.9L575.5,261.9L569.9,264.5M569.9,264.5L565.0,267.2L562.2,266.2M562.9,261.4L564.1,261.5L564.5,262.5L563.1,263.4L562.5,264.8L562.5,265.8L562.2,266.2M562.5,264.8L561.8,264.9L561.6,265.3L560.8,265.3M562.2,266.2L561.8,267.0L561.8,268.6L561.4,269.3L561.5,270.3L560.2,274.3M558.6,270.0L560.2,274.3M560.3,274.6L563.1,275.0L564.2,274.2L564.8,273.3L566.7,273.0L567.1,272.2L568.0,271.7L565.5,269.2L570.5,268.0L571.0,267.6M571.0,267.6L569.9,264.5M571.0,267.6L574.0,268.3L577.7,270.0L584.7,275.1L589.4,275.3M589.4,275.3L591.6,275.5L592.3,276.7L594.0,276.6M589.4,275.3L591.2,272.9L592.9,273.1M584.9,255.1L586.5,258.0L588.2,258.8L588.4,260.3L587.1,261.1L586.5,263.1L588.3,265.5L591.3,266.8L592.6,268.7L592.2,270.6L593.0,270.5L593.0,271.9L594.4,273.2M579.9,307.2L581.0,306.4L580.8,305.3L581.4,304.1L582.4,304.7L583.1,304.5L586.0,304.5L586.5,304.7L588.9,305.0L589.9,304.8L590.5,305.7L591.7,305.2L593.4,302.6L595.8,301.5L603.0,300.5M603.0,300.5L604.9,304.7L605.8,306.4M603.0,300.5L610.5,298.0L612.2,293.0M612.2,293.0L611.0,291.3L610.5,291.8L603.0,290.5L602.0,288.0L601.9,287.4M611.0,291.3L611.1,290.3L611.8,289.2L611.8,288.2L613.0,287.7L612.5,287.4L612.7,285.7L614.0,285.7M600.0,286.2L600.8,286.6L601.5,286.5M607.8,255.0L610.0,254.5L611.8,253.1L613.5,253.1L614.6,252.7L616.3,252.9L619.1,254.2L621.1,254.5L624.0,256.7L625.8,256.8L626.0,258.9M626.0,258.9L625.0,262.0L624.3,263.8L625.4,264.2L624.4,265.6L625.2,267.6L625.4,269.1L627.3,269.6L627.5,271.2L625.2,273.4M625.2,273.4L626.4,274.8L627.5,276.3L629.9,277.4L629.9,279.6L631.1,280.0L631.3,281.1L627.7,282.4L626.8,285.3M625.2,273.4L629.4,274.7L631.9,274.3L633.4,274.7L633.9,274.1L635.7,274.3L638.9,273.3L639.0,271.2L640.4,269.8L642.2,269.8L642.5,269.1L644.4,268.7L645.4,269.0L646.3,268.3L646.2,266.8L647.3,265.2L648.9,264.6L647.9,262.9L650.3,263.0L651.0,262.1L650.9,261.2L652.1,260.1L651.8,258.9L651.2,257.8L652.7,256.7L655.4,256.2L658.2,255.9L659.5,255.4L661.0,255.2M626.0,258.9L628.6,259.8L630.5,259.5L631.0,258.3L633.0,258.0L634.4,257.2L634.9,255.2L637.0,254.7L637.4,253.8L638.6,254.5L639.3,254.6L640.7,254.6M640.7,254.6L642.6,255.1L643.4,255.4L645.2,254.6L646.0,255.1L646.8,254.0L648.4,254.0L648.7,253.6L649.0,252.6L650.1,251.8L651.4,252.3L651.2,253.1L651.9,253.2L651.7,255.3L652.7,256.1L653.5,255.6L654.7,255.4L656.2,254.2L657.9,254.4L660.5,254.4M604.2,243.5L605.3,242.7L608.2,242.2L609.9,242.9L611.7,244.8L612.9,244.7M612.9,244.7L615.8,244.7L615.3,243.4L617.5,242.5L619.6,241.1L623.0,242.4L623.2,244.4L624.2,244.9L626.9,244.8L627.7,245.3L629.0,247.9L631.8,249.6L633.5,250.8L636.1,252.0L639.4,253.1L639.3,254.6M612.9,244.7L612.8,235.5L619.3,234.0L619.7,234.2L623.6,236.0L625.7,236.9L628.1,239.2L631.0,238.8L635.3,238.6L638.3,240.5L638.1,243.0L639.3,243.0L639.8,245.1L643.0,245.1L643.7,246.3L644.6,246.3L645.7,244.5L649.0,242.8L650.5,242.3M650.5,242.3L651.0,241.2L652.7,240.8L656.8,241.7L657.2,240.2L658.6,239.7L662.2,240.8L663.1,240.5L667.2,240.6L670.9,240.8L672.2,241.7L673.7,242.1M640.7,254.6L641.6,254.9L644.0,252.6L643.5,250.7L641.6,250.1L642.3,249.0L644.4,249.2L645.6,247.8L646.4,246.2L649.7,245.6L649.2,246.7L649.6,247.4L650.6,247.4M650.6,247.4L652.5,247.6L655.7,245.8L652.7,244.5L651.0,245.1L649.1,244.2L651.2,242.5L650.5,242.3M650.6,247.4L649.7,248.1L646.9,247.7L646.7,249.2L649.4,249.0L652.5,249.8L657.3,249.4M643.5,288.8L645.1,287.1L650.7,287.1L650.2,285.0L648.8,283.7L648.5,281.8L646.8,280.7L649.6,278.0L652.5,278.2L655.1,275.6L656.7,273.1L659.1,270.6L659.1,268.8L661.2,267.3L659.2,266.1L658.3,264.4L657.4,262.2L658.7,261.1L662.5,261.7L665.2,261.4L667.7,259.3M675.9,272.6L674.3,273.7L673.3,276.0L675.7,277.0L678.1,278.2L681.3,279.6L684.8,279.9L686.2,281.2L688.1,281.4L691.2,282.0L693.3,282.0L693.5,281.0L693.2,279.4L693.4,278.3M695.1,279.8L695.2,280.3L697.5,281.2L699.0,280.8L701.2,281.0L703.2,280.9L703.4,279.4L702.4,278.6M695.7,292.9L695.3,290.8L694.4,289.0L694.9,287.5L693.3,286.8L693.9,285.9L695.4,284.9L693.6,283.6L694.5,281.9L696.5,283.0L697.7,283.1L697.9,284.8L700.3,285.2L702.6,285.1L704.1,285.6L702.9,287.7L701.8,287.9L701.0,289.3L702.4,290.6L702.8,289.0L703.5,289.0L704.8,292.9L704.7,294.7L703.9,294.3L704.0,296.4M704.8,292.9L706.0,292.3L705.8,291.3L706.3,290.4L706.4,287.8L708.4,288.4L709.5,286.3L709.6,285.1L711.0,283.0L710.9,281.6L714.2,279.9L716.0,280.3L715.8,278.8L716.6,278.3L716.5,277.4M726.0,293.4L724.0,296.1L723.4,297.0M723.4,297.0L722.0,297.6L720.5,298.7L718.8,298.8L717.6,301.5L716.6,301.9L717.8,304.1L719.4,305.9L720.4,307.6L719.5,309.8L718.6,310.3L719.2,311.5L720.9,313.5L721.2,314.9L721.1,316.1L722.1,318.3L720.7,320.7L719.5,323.2M723.4,297.0L724.5,297.8L724.7,299.3L726.3,299.4L725.7,302.0L725.8,304.3L728.4,302.8L729.2,303.2L730.6,303.1L731.1,302.3L733.1,302.4L735.0,304.5L735.1,307.0L737.1,309.1L737.0,311.3L736.2,312.4M736.2,312.4L733.9,312.0L730.6,312.5L729.0,314.6L729.6,317.6M736.2,312.4L738.3,313.4L739.4,311.6L741.6,312.6M741.6,312.6L742.2,314.2L741.9,317.2L737.7,319.1L738.8,320.7L736.2,320.8L734.0,321.8M741.6,312.6L742.1,310.1L741.4,308.3L739.6,306.6L738.0,304.3L735.9,301.4L732.9,299.9L733.6,299.0L735.2,298.3L734.3,296.1L731.1,296.1L730.0,293.8L728.6,291.9M723.4,331.9L723.8,331.5L725.8,332.6L726.0,333.9L727.7,333.6L728.5,332.5M747.3,343.1L747.7,344.7L749.4,346.2L751.1,345.6L752.7,345.8L754.1,344.6L755.3,344.3L757.7,345.0L759.7,344.5L761.0,341.0L762.0,340.2L762.9,337.3L765.7,337.3L767.9,337.7M758.7,336.8L759.8,338.1L760.4,337.2L761.6,337.3L761.7,335.7L761.8,334.5M825.8,354.6L825.8,362.8L825.8,370.9M785.6,370.4L785.9,370.9L785.9,371.6M794.1,251.5L792.7,252.2L790.9,252.3L789.9,253.5L788.8,253.4L788.6,253.6"/></g>
<path d="M595.7,232.0L594.6,233.4L592.2,233.9L589.7,236.4L592.0,238.8L591.7,240.5L594.4,243.4L595.8,244.8L597.0,246.6L598.2,246.7L599.0,247.3L596.9,247.5L596.5,249.5L596.0,250.4L595.1,250.9L595.2,252.2L596.0,254.0L598.4,254.6L600.1,255.8L603.6,256.2L607.6,255.6L607.8,255.0L607.4,253.2L607.7,250.6L605.7,249.8L606.4,248.0L604.7,247.9L605.3,245.8L607.7,246.4L609.9,245.6L608.0,244.1L607.3,242.7L605.3,243.3L605.0,245.1L604.2,243.5L604.1,242.9L604.7,241.9L604.2,241.0L601.3,240.1L600.2,237.9L598.8,237.3L598.8,236.4L601.2,236.7L601.3,234.8L603.4,234.4L605.6,234.8L606.0,232.4L605.6,230.8L603.1,231.0L601.0,230.3L598.1,231.4L595.7,232.0Z" fill="#fff" stroke="none"/>
<path d="M235.5,224.5L236.0,225.9L236.7,226.3L238.5,226.4L241.0,226.8L243.5,227.6L245.5,227.3L248.6,227.9L249.4,227.9L251.6,227.2L254.0,228.1L256.4,229.1L258.5,229.9L260.4,230.7L260.6,231.4L261.2,231.6L261.1,231.9L261.7,231.9L262.2,231.7L262.4,232.3L262.9,232.7L263.5,232.7L263.9,233.0L263.6,233.4L266.2,234.6L266.7,236.9L267.2,239.0L266.5,240.5L265.3,241.9L264.8,242.8L264.7,243.0L265.0,243.4L265.9,243.8L266.5,243.8L269.4,242.4L272.0,242.0L275.3,240.8L275.3,240.5L275.1,239.8L274.7,239.3L275.8,238.9L280.6,238.9L281.4,237.9L281.7,237.7L284.3,235.9L285.4,235.5L289.2,235.4L293.9,235.4L294.1,234.8L294.9,234.7L296.0,234.3L296.9,233.2L297.6,231.2L299.5,229.3L300.4,230.0L302.1,229.6L303.2,230.3L303.2,233.7L304.8,235.1L305.2,235.9L302.6,237.1L300.0,238.0L297.3,238.8L296.0,240.2L295.6,240.8L295.6,242.1L296.4,243.4L297.4,243.5L297.2,242.6L297.9,243.2L297.7,243.9L296.0,244.3L294.8,244.3L293.0,244.7L291.9,244.8L290.4,244.9L288.3,245.7L292.0,245.2L292.7,245.7L289.2,246.4L287.7,246.4L287.7,246.1L287.0,246.8L287.7,246.9L287.2,248.7L285.3,250.6L285.2,250.0L284.6,249.9L283.8,249.2L284.3,250.6L284.9,251.0L285.0,252.0L284.2,252.9L282.8,254.9L282.5,254.8L283.3,253.1L282.0,252.2L281.7,250.1L281.3,251.2L281.8,252.8L280.1,252.4L281.9,253.2L282.0,255.6L282.7,255.7L282.9,256.6L283.3,259.1L281.7,261.0L279.1,261.7L277.5,263.2L276.2,263.3L275.0,264.3L274.6,265.1L271.8,266.7L270.4,267.9L269.2,269.4L268.9,271.2L269.3,272.9L270.1,275.1L271.2,276.8L271.3,277.9L272.4,280.8L272.4,282.5L272.3,283.5L271.6,285.0L270.9,285.3L269.7,285.0L269.3,283.9L268.3,283.3L267.0,281.2L265.8,279.3L265.4,278.3L266.0,276.6L265.3,275.3L263.3,273.2L262.3,272.8L259.8,273.9L259.4,273.8L258.2,272.6L256.6,272.0L253.8,272.3L251.5,272.1L249.6,272.2L248.6,272.6L249.0,273.3L249.0,274.3L249.5,274.8L249.0,275.1L248.1,274.7L247.2,275.2L245.4,275.1L243.5,273.8L241.3,274.1L239.5,273.6L237.9,273.7L235.8,274.3L233.6,276.2L231.1,277.2L229.7,278.4L229.1,279.6L229.1,281.3L229.2,282.5L229.7,283.3L228.7,283.4L226.9,282.9L225.0,282.1L224.3,280.9L223.7,279.2L222.3,277.7L221.4,276.3L220.1,274.6L218.4,273.6L216.3,273.6L214.8,275.6L212.7,274.8L211.4,274.1L210.8,272.7L209.9,271.4L208.4,270.3L207.2,269.5L206.2,268.6L201.9,268.6L201.9,269.7L199.9,269.7L195.0,269.7L189.3,267.9L185.4,266.7L185.7,266.2L182.5,266.5L179.7,266.7L179.2,265.4L177.6,263.9L176.5,263.6L176.2,262.9L174.8,262.8L173.9,262.1L171.6,261.9L170.9,261.5L170.6,260.1L168.2,257.6L166.1,254.1L166.2,253.5L165.1,252.7L163.1,250.6L162.8,248.6L161.5,247.2L162.0,245.1L161.9,243.0L161.1,241.0L162.1,238.7L162.4,236.4L162.7,234.2L162.3,230.8L161.5,228.7L160.7,227.5L161.0,227.0L164.7,227.9L166.0,230.2L166.6,229.6L166.2,227.5L165.4,225.5L172.5,225.5L179.9,225.5L182.4,225.5L190.0,225.5L197.4,225.5L204.9,225.5L212.4,225.5L220.9,225.5L229.5,225.5L234.7,225.5L234.7,224.5L235.5,224.5ZM84.7,170.0L86.5,171.1L87.6,170.7L91.9,170.8L91.7,171.4L95.5,171.8L98.1,171.6L103.4,172.4L108.2,172.6L110.1,172.9L113.4,172.5L117.2,173.3L119.9,173.6L119.9,182.9L119.9,197.1L122.4,197.2L124.8,197.9L126.6,199.0L128.8,200.6L131.2,199.3L133.7,198.4L135.1,199.7L136.8,200.8L139.0,201.9L140.6,203.7L143.2,206.6L147.4,208.1L147.5,209.7L146.1,210.9L144.7,210.0L142.5,209.2L141.8,207.0L138.6,205.0L137.2,202.6L134.8,202.5L130.9,202.4L127.9,201.7L122.7,199.1L120.3,198.6L116.0,197.7L112.5,197.9L107.6,196.8L104.6,195.7L101.8,196.2L102.3,198.0L101.0,198.1L98.1,198.6L95.9,199.5L93.1,200.0L92.7,198.6L93.9,196.1L96.5,195.3L95.8,194.7L92.6,196.1L90.9,197.8L87.3,199.5L89.2,200.8L86.8,202.6L84.1,203.6L81.6,204.4L81.0,205.5L77.1,206.8L76.3,208.0L73.4,209.0L71.6,208.8L69.3,209.5L66.8,210.4L64.7,211.2L60.4,211.9L60.0,211.5L62.7,210.3L65.2,209.6L67.9,208.2L71.0,207.9L72.2,206.9L75.7,205.4L76.2,204.9L78.1,204.0L78.5,202.1L79.8,200.6L76.9,201.4L76.1,200.9L74.7,201.9L73.1,200.6L72.4,201.5L71.5,200.2L69.0,201.2L67.4,201.2L67.2,199.7L67.7,198.8L66.1,197.9L62.8,198.4L60.7,197.2L59.0,196.6L59.0,195.2L57.0,194.2L58.0,192.7L60.0,191.3L60.9,190.0L63.0,189.9L64.7,190.3L66.7,189.1L68.5,189.3L70.4,188.5L70.0,187.4L68.6,186.9L70.4,185.9L68.9,186.0L66.2,186.5L65.5,187.1L63.5,186.5L59.9,186.8L56.3,186.2L55.2,185.2L52.1,183.7L55.6,182.7L61.2,181.5L63.2,181.5L62.9,182.7L68.2,182.6L66.1,181.0L63.0,180.1L61.3,178.8L58.9,177.8L55.4,177.0L56.8,175.7L61.3,175.6L64.4,174.5L65.0,173.2L67.6,172.1L70.0,171.8L74.8,170.7L77.1,170.8L80.9,169.5L84.7,170.0ZM89.9,205.1L87.4,206.1L86.1,205.5L85.7,204.3L88.0,203.4L89.3,203.0L91.0,203.2L92.0,204.0L89.9,205.1ZM58.4,198.1L56.9,198.5L55.2,198.1L53.7,197.4L56.2,197.0L58.2,197.2L58.4,198.1ZM43.0,188.5L44.6,188.9L46.1,188.7L48.1,189.3L50.6,189.7L50.4,189.9L48.5,190.5L46.6,189.9L45.7,189.5L43.5,189.6L42.8,189.4L43.0,188.5ZM83.5,300.3L82.5,300.4L82.2,298.8L82.7,297.4L84.3,298.1L85.4,299.3L83.5,300.3ZM80.9,296.0L81.7,295.7L82.4,296.1L81.4,296.6L80.9,296.0ZM76.7,294.2L77.5,293.9L78.2,294.7L77.0,294.8L76.7,294.2Z" fill="#5f956b" stroke="#fbfbfb" stroke-width="0.6" stroke-linejoin="round"/>
<path d="M550.7,174.0L553.3,173.1L557.4,174.6L564.2,175.2L573.7,178.1L575.6,179.2L575.8,180.9L573.0,182.2L568.9,182.9L557.7,181.0L555.9,181.3L560.0,183.2L560.1,184.3L560.3,186.9L563.5,187.6L565.5,188.3L565.8,187.1L564.3,186.0L565.9,185.1L571.9,186.6L574.1,186.0L572.4,184.2L578.2,181.7L580.5,181.9L582.8,182.7L584.3,181.0L582.2,179.5L583.4,178.0L581.6,176.5L588.6,177.3L590.0,178.7L586.9,179.0L586.9,180.4L588.9,181.2L592.7,180.7L593.3,179.1L598.6,177.9L607.3,175.7L609.2,175.9L606.7,177.4L609.8,177.6L611.6,176.8L616.3,176.7L620.0,175.7L622.9,177.2L625.7,175.5L623.1,174.1L624.4,173.3L631.8,174.0L635.3,174.8L644.3,177.7L646.0,176.3L643.4,175.0L643.4,174.5L640.4,174.3L641.2,173.1L639.8,171.1L639.8,170.3L644.4,168.1L646.0,165.8L647.9,165.3L654.5,165.9L655.1,167.3L652.7,169.4L654.2,170.2L655.0,171.9L654.5,175.3L657.2,176.9L656.2,178.5L651.3,182.1L654.1,182.5L655.1,181.6L657.9,180.9L658.5,179.7L660.7,178.5L659.2,177.1L660.4,175.4L657.7,175.2L657.1,173.8L659.1,171.3L655.8,169.3L660.3,167.6L659.7,165.8L661.0,165.8L662.3,167.1L661.3,169.5L664.0,170.0L662.8,168.2L667.0,167.2L672.2,167.1L676.8,168.5L674.6,166.4L674.4,163.8L678.7,163.3L684.7,163.4L690.2,163.0L688.1,161.7L691.0,160.1L693.9,160.0L698.8,158.8L705.4,158.4L706.2,157.7L712.8,157.5L714.8,158.1L720.4,156.7L725.0,156.8L725.7,155.7L728.1,154.6L734.0,153.6L738.3,154.4L734.9,155.0L740.6,155.4L741.3,156.7L743.5,156.1L750.9,156.1L756.5,157.3L758.5,158.2L757.9,159.5L755.1,160.3L748.5,161.7L746.7,162.4L749.8,162.8L753.5,163.4L755.7,162.9L757.0,164.5L758.1,163.9L762.1,163.5L770.1,163.9L770.7,165.1L781.2,165.5L781.4,163.5L786.7,164.0L790.7,164.0L794.7,165.3L795.9,166.9L794.4,167.9L797.5,169.9L801.5,170.9L803.9,168.3L807.9,169.4L812.1,168.7L817.0,169.5L818.8,168.8L822.9,169.2L821.1,166.8L824.4,165.8L847.0,167.4L849.2,168.9L855.7,170.8L865.8,170.3L870.8,170.7L872.9,171.8L872.6,173.6L875.7,174.3L879.0,173.8L883.5,173.7L888.2,174.2L892.9,173.9L897.3,176.2L900.4,175.4L898.4,173.8L899.5,172.6L907.5,173.3L912.7,173.2L919.9,174.4L923.4,175.5L923.4,185.5L920.2,186.6L916.9,186.4L919.1,187.7L920.7,189.8L921.8,190.5L922.1,191.5L921.5,192.2L916.8,191.6L909.8,193.5L907.6,193.8L903.7,195.5L900.1,197.1L899.2,198.2L895.6,196.5L889.1,198.4L887.9,197.5L885.5,198.6L882.2,198.2L881.4,199.9L878.4,202.3L878.5,203.3L881.3,203.9L881.0,207.5L878.7,207.6L877.6,209.7L878.6,210.8L874.2,212.1L873.4,214.9L869.6,215.5L868.9,218.1L865.3,220.4L864.4,218.7L863.3,215.0L861.9,209.5L863.1,206.0L865.2,204.5L865.3,203.4L869.2,202.8L873.7,199.6L878.0,197.1L882.5,195.1L884.5,191.5L881.5,191.7L880.0,193.8L873.6,196.6L871.6,193.5L865.1,194.3L858.9,198.5L860.9,200.1L855.3,200.7L851.5,201.0L851.6,199.2L847.7,198.8L844.6,200.0L837.0,199.6L828.8,200.3L820.7,205.2L811.1,211.1L815.0,211.4L816.2,213.0L818.7,213.5L820.3,212.3L823.0,212.5L826.6,215.2L826.7,217.3L824.8,219.8L824.5,222.8L823.4,226.8L819.6,230.5L818.8,232.2L810.4,239.5L807.1,240.9L805.5,241.0L803.9,239.8L800.6,241.6L800.2,242.4L799.8,242.0L799.8,240.7L801.1,240.6L801.5,237.7L800.8,235.5L802.9,234.7L806.0,235.1L807.7,232.7L808.5,229.9L809.5,229.0L810.8,226.8L806.7,227.5L804.5,228.5L800.7,228.5L799.7,226.1L796.7,224.4L792.4,223.6L791.4,221.1L790.6,219.6L789.6,218.5L788.1,216.0L785.9,215.0L782.1,214.3L778.8,214.4L775.7,214.8L773.7,216.1L775.0,216.6L775.1,218.0L773.7,218.8L771.4,221.5L771.4,222.6L767.9,224.2L764.9,223.2L761.9,223.4L760.6,222.6L759.1,222.3L755.4,224.1L752.1,224.5L749.8,225.1L746.7,224.7L744.4,224.8L742.8,223.5L740.4,222.3L737.9,221.9L734.7,222.2L732.4,222.7L728.8,221.7L728.3,219.8L725.4,219.1L723.1,218.9L720.3,217.8L717.7,220.4L718.7,221.9L716.3,223.6L712.7,223.0L710.2,222.9L708.5,221.7L705.9,221.7L703.7,220.9L699.9,222.1L695.1,224.3L692.5,224.7L691.5,224.9L690.2,223.4L686.9,223.7L685.9,222.6L684.1,222.2L682.9,220.7L681.5,220.3L678.0,220.9L674.5,219.5L673.2,220.8L667.6,214.4L664.4,212.5L665.3,211.7L659.0,214.1L656.6,214.2L656.8,212.8L653.6,212.0L651.0,212.6L650.2,210.0L645.7,209.5L643.5,210.5L637.2,211.4L636.0,212.1L626.6,212.9L625.5,213.8L627.3,215.5L624.9,216.1L625.3,216.8L622.9,218.0L627.0,219.8L626.4,220.9L622.8,220.8L622.1,221.6L618.9,220.3L615.0,220.3L612.3,221.4L609.3,220.4L603.8,218.6L599.9,218.7L594.7,221.4L594.4,223.3L591.9,221.8L589.9,224.6L590.6,225.1L589.2,227.0L591.3,228.7L593.1,228.6L594.7,230.3L594.5,231.6L595.7,232.0L594.6,233.4L592.2,233.9L589.7,236.4L592.0,238.8L591.7,240.5L594.4,243.4L593.0,244.5L592.5,245.1L591.4,244.9L589.7,243.4L589.0,243.3L587.4,242.7L586.7,241.7L584.3,241.2L582.8,241.6L582.4,241.1L578.9,239.9L575.3,239.5L573.2,239.1L572.9,239.4L569.7,237.3L566.8,236.3L564.7,234.9L566.5,234.5L568.5,232.4L567.1,231.4L570.8,230.4L570.8,229.8L568.5,230.2L568.6,229.1L569.9,228.4L572.3,228.2L572.7,227.4L572.1,226.0L573.2,224.7L573.1,224.0L569.4,223.1L568.0,223.2L566.4,222.0L564.5,222.4L561.3,221.5L561.4,221.0L560.5,219.9L558.5,219.8L558.3,219.0L558.9,218.5L557.3,217.1L554.7,217.3L554.0,217.2L553.3,217.8L552.4,217.7L551.8,216.1L551.2,215.3L551.7,215.0L553.7,215.1L554.7,214.6L554.0,213.9L552.3,213.5L552.4,213.0L551.4,212.5L549.8,210.9L550.4,210.2L550.1,209.1L547.7,208.5L546.4,208.8L546.0,208.1L543.4,207.5L542.6,206.0L542.3,204.8L541.1,204.3L542.2,203.5L541.5,201.1L543.2,199.7L542.9,199.2L545.7,197.8L543.1,196.7L548.5,193.5L550.8,192.0L551.7,190.7L548.0,189.0L549.0,187.4L546.8,185.5L548.5,183.4L545.6,180.5L547.9,178.6L544.1,177.0L544.4,175.2L546.4,175.0L550.7,174.0ZM522.0,211.9L522.6,210.8L526.1,210.0L528.7,210.4L529.8,210.8L529.5,211.5L529.7,212.1L525.1,212.2L522.0,211.9ZM601.6,167.9L604.2,167.3L604.1,166.0L609.1,163.8L606.8,163.5L612.8,161.3L612.1,160.2L617.7,158.8L625.9,157.2L634.3,156.8L638.6,155.8L643.4,155.5L645.2,156.5L643.5,157.3L634.6,158.5L627.0,159.7L619.2,162.1L615.5,164.6L611.6,167.0L612.1,169.0L616.9,171.1L615.4,171.3L607.2,171.0L606.5,169.9L602.0,169.2L601.6,167.9ZM723.0,150.7L717.5,151.0L710.5,150.3L706.4,149.3L704.5,147.5L701.1,147.0L707.6,145.3L713.0,144.7L717.8,146.0L723.6,148.4L723.0,150.7ZM735.9,152.1L721.7,153.1L726.3,149.8L728.4,149.5L730.2,149.7L736.6,151.1L735.9,152.1ZM838.6,159.9L839.2,159.1L843.8,159.5L850.1,160.2L847.2,161.2L843.2,160.9L838.6,159.9ZM820.3,157.5L826.9,157.6L836.0,159.0L834.0,160.8L824.8,160.8L820.7,161.4L815.7,159.7L817.0,158.0L820.3,157.5ZM828.4,163.2L832.0,164.2L832.3,164.9L828.5,164.9L823.4,164.6L822.9,164.5L825.3,163.5L828.4,163.2ZM923.4,170.8L920.6,170.9L920.2,170.1L923.4,169.1ZM22.3,169.1L22.6,169.0L24.8,169.0L28.4,169.7L28.2,170.1L25.6,170.7L22.3,170.8ZM22.3,175.5L28.4,177.4L35.0,179.9L34.8,181.5L36.5,182.1L35.9,180.2L42.7,180.6L47.6,183.0L45.1,184.1L41.0,184.3L40.9,186.8L39.9,187.3L37.6,187.2L35.7,186.3L32.4,185.6L31.8,184.5L29.3,184.1L26.4,184.4L25.1,183.6L25.6,182.6L22.6,183.2L23.7,184.4L22.3,185.5ZM590.0,146.0L594.5,147.2L599.5,146.7L597.5,145.5L592.5,145.5L590.0,146.0Z" fill="#93bc95" stroke="#fbfbfb" stroke-width="0.6" stroke-linejoin="round"/>
<path d="M783.9,248.2L780.4,248.9L778.5,250.1L775.8,250.7L777.2,249.6L776.7,248.6L778.6,246.9L777.3,245.6L775.1,246.5L772.3,248.2L770.7,249.9L768.3,250.0L767.0,251.1L768.3,252.8L770.4,253.2L770.5,254.4L772.4,255.1L775.3,253.3L777.5,254.3L779.1,254.4L779.5,255.7L776.0,256.4L774.8,257.7L772.3,259.0L771.1,260.7L773.8,262.1L774.8,264.5L776.3,266.9L778.0,268.8L777.9,270.6L776.4,271.3L777.0,272.7L778.4,273.4L778.1,275.5L777.4,277.4L776.0,277.7L774.2,280.4L772.2,283.7L769.8,286.7L766.4,289.0L762.9,291.1L760.1,291.4L758.6,292.5L757.7,291.7L756.3,292.9L752.8,294.2L750.1,294.5L749.3,297.2L747.9,297.3L747.2,295.5L747.8,294.5L744.5,293.7L743.3,294.2L740.8,293.5L739.6,292.5L740.0,291.1L737.7,290.6L736.5,289.7L734.4,291.0L731.9,291.3L729.9,291.3L728.6,291.9L727.3,292.2L727.6,295.1L726.3,295.0L726.1,294.4L726.0,293.4L724.2,294.1L723.1,293.7L721.2,292.7L722.0,290.7L720.4,290.2L719.8,287.9L717.1,288.3L717.4,285.3L719.8,283.2L719.9,281.2L719.8,279.2L718.8,278.6L717.9,277.2L716.5,277.4L713.8,277.0L714.6,275.9L713.4,274.4L711.6,275.4L709.5,274.8L706.6,276.4L704.4,278.3L702.4,278.6L701.3,277.9L699.9,277.9L698.2,277.3L696.8,277.9L695.1,279.8L694.9,277.8L693.4,278.3L690.5,278.1L687.6,277.5L685.6,276.4L683.7,275.9L682.8,274.7L681.4,274.4L678.9,272.7L676.9,272.0L675.9,272.6L672.4,270.8L669.9,269.2L669.2,266.5L671.0,266.8L671.1,265.5L670.1,264.2L670.4,262.2L667.7,259.3L663.5,258.2L662.8,256.3L661.0,255.2L660.5,254.4L660.1,253.0L660.2,252.0L658.7,251.5L657.9,251.7L657.3,249.4L658.0,248.8L657.6,248.3L660.0,247.1L661.7,246.6L664.4,246.9L665.3,245.3L668.5,245.0L669.4,244.0L673.4,242.7L673.7,242.1L673.5,240.7L675.3,240.0L673.0,235.7L678.0,234.7L679.2,234.1L681.0,229.6L686.0,230.5L687.4,229.3L687.5,226.8L689.6,226.6L691.5,224.9L692.5,224.7L693.1,226.5L695.2,227.8L698.8,228.7L700.5,230.7L699.6,233.7L700.5,234.7L703.4,235.2L706.8,235.5L709.8,237.1L711.4,237.4L712.5,239.7L714.0,241.1L716.8,241.1L721.9,241.7L725.3,241.3L727.7,241.7L731.4,243.2L734.5,243.2L735.6,244.0L738.5,242.6L742.5,241.8L746.3,241.7L749.2,240.8L751.0,239.4L752.8,238.6L752.4,237.8L751.5,236.8L752.9,235.2L754.3,235.4L756.8,235.9L759.3,234.6L763.2,233.6L765.0,232.0L766.7,231.3L770.4,230.9L772.3,231.2L772.6,230.3L770.4,228.6L768.3,227.8L766.4,228.7L764.0,228.3L762.5,228.6L761.9,227.6L763.7,225.1L764.9,223.2L767.9,224.2L771.4,222.6L771.4,221.5L773.7,218.8L775.1,218.0L775.0,216.6L773.7,216.1L775.7,214.8L778.8,214.4L782.1,214.3L785.9,215.0L788.1,216.0L789.6,218.5L790.6,219.6L791.4,221.1L792.4,223.6L796.7,224.4L799.7,226.1L800.7,228.5L804.5,228.5L806.7,227.5L810.8,226.8L809.5,229.0L808.5,229.9L807.7,232.7L806.0,235.1L802.9,234.7L800.8,235.5L801.5,237.7L801.1,240.6L799.8,240.7L799.8,242.0L798.2,240.5L797.2,241.9L793.3,243.0L793.7,244.3L791.6,244.2L790.4,243.4L788.7,245.2L785.9,246.6L783.9,248.2Z" fill="#9cc59d" stroke="#fbfbfb" stroke-width="0.9" stroke-linejoin="round"/>
<path d="M832.4,221.1L834.9,225.5L831.2,224.7L829.7,228.3L832.1,230.9L832.0,232.6L830.1,231.1L828.5,233.0L828.0,230.9L828.3,228.5L828.0,225.8L828.6,223.9L828.7,220.6L827.2,218.1L827.5,214.7L829.8,213.5L828.8,212.4L829.9,212.0L830.5,213.7L831.4,216.1L831.4,218.5L832.4,221.1Z" fill="#7d9e86" stroke="#fbfbfb" stroke-width="1.0" stroke-linejoin="round"/>
<path d="M749.0,301.3L746.9,302.5L744.8,301.8L744.7,299.6L746.0,298.5L748.7,297.8L750.1,297.8L750.7,298.8L749.6,299.9L749.0,301.3Z" fill="#6f9f80" stroke="#fbfbfb" stroke-width="0.8" stroke-linejoin="round"/>
<path d="M503.8,231.0L507.4,231.7L507.1,232.9L507.7,234.0L505.7,233.6L503.7,234.5L503.8,235.7L503.5,236.5L504.4,237.7L506.7,239.0L508.0,241.1L510.7,243.1L512.7,243.1L513.3,243.6L512.6,244.1L514.9,245.0L516.7,245.8L518.8,247.1L519.1,247.6L518.6,248.5L517.2,247.3L515.1,246.9L514.0,248.5L515.8,249.4L515.5,250.7L514.5,250.9L513.1,253.0L512.1,253.2L512.1,252.5L512.6,251.1L513.2,250.6L512.2,249.1L511.4,247.9L510.4,247.6L509.6,246.5L508.0,246.0L507.0,245.0L505.1,244.9L503.2,243.7L500.8,242.1L499.1,240.6L498.4,238.2L497.1,237.9L495.1,237.0L493.9,237.4L492.5,238.5L491.5,238.7L491.7,237.6L490.4,237.3L489.7,235.4L490.6,234.6L489.9,233.7L490.0,233.0L491.0,233.5L492.3,233.4L493.7,232.6L494.1,232.9L495.3,232.9L495.8,231.9L497.7,232.2L498.8,231.8L499.0,230.7L500.5,231.1L500.8,230.6L503.3,230.2L503.8,231.0ZM511.7,252.4L510.8,254.4L511.2,255.2L510.6,256.4L508.7,255.5L507.5,255.2L504.0,254.0L504.3,252.7L507.2,252.9L509.8,252.6L511.7,252.4ZM495.9,245.0L497.4,246.7L497.0,250.0L495.9,249.9L494.9,250.7L493.9,250.1L493.8,247.0L493.3,245.6L494.6,245.7L495.9,245.0Z" fill="#cbe4c8" stroke="#fbfbfb" stroke-width="0.6" stroke-linejoin="round"/>
<path d="M497.7,210.5L497.7,211.4L500.2,212.0L500.2,212.9L502.8,212.4L504.2,211.8L507.0,212.7L508.2,213.5L508.8,214.8L508.1,215.5L509.0,216.4L509.6,217.7L509.4,218.6L510.4,220.2L509.3,220.4L508.7,220.1L508.0,220.6L506.2,221.1L505.3,221.7L503.5,222.3L503.9,223.0L504.2,224.1L505.5,224.7L506.9,225.8L506.0,226.9L505.1,227.2L505.5,228.9L505.2,229.3L504.4,228.8L503.2,228.7L501.4,229.2L499.2,229.0L498.9,229.7L497.6,229.0L496.8,229.1L494.2,228.4L493.7,228.9L491.5,228.9L491.8,227.1L493.1,225.4L489.5,225.0L488.3,224.3L488.5,223.2L488.0,222.6L488.3,220.9L487.8,218.3L489.3,218.3L490.0,217.4L490.6,215.1L490.1,214.2L490.6,213.7L492.7,213.6L493.2,214.1L494.9,212.9L494.3,211.9L494.2,210.5L496.1,210.9L497.7,210.5Z" fill="#00441b" stroke="#fbfbfb" stroke-width="0.6" stroke-linejoin="round"/>
<path d="M531.6,213.2L534.0,213.2L536.8,212.2L537.3,210.8L539.4,210.0L539.1,208.9L540.7,208.5L543.4,207.5L546.0,208.1L546.4,208.8L547.7,208.5L550.1,209.1L550.4,210.2L549.8,210.9L551.4,212.5L552.4,213.0L552.3,213.5L554.0,213.9L554.7,214.6L553.7,215.1L551.7,215.0L551.2,215.3L551.8,216.1L552.4,217.7L550.3,217.8L549.5,218.4L549.3,219.6L548.3,219.4L546.1,219.5L545.4,218.9L544.5,219.4L543.5,219.0L541.5,219.0L538.8,218.4L536.2,218.2L534.3,218.2L532.9,218.9L531.7,219.0L531.7,217.9L530.9,216.7L532.4,216.2L532.4,215.2L531.7,214.3L531.6,213.2Z" fill="#0c74a9" stroke="#e1f4fa" stroke-width="1.3" stroke-linejoin="round"/>
</svg>
<div class="tip"><b>Belarus</b>6.36</div>
</body></html>
